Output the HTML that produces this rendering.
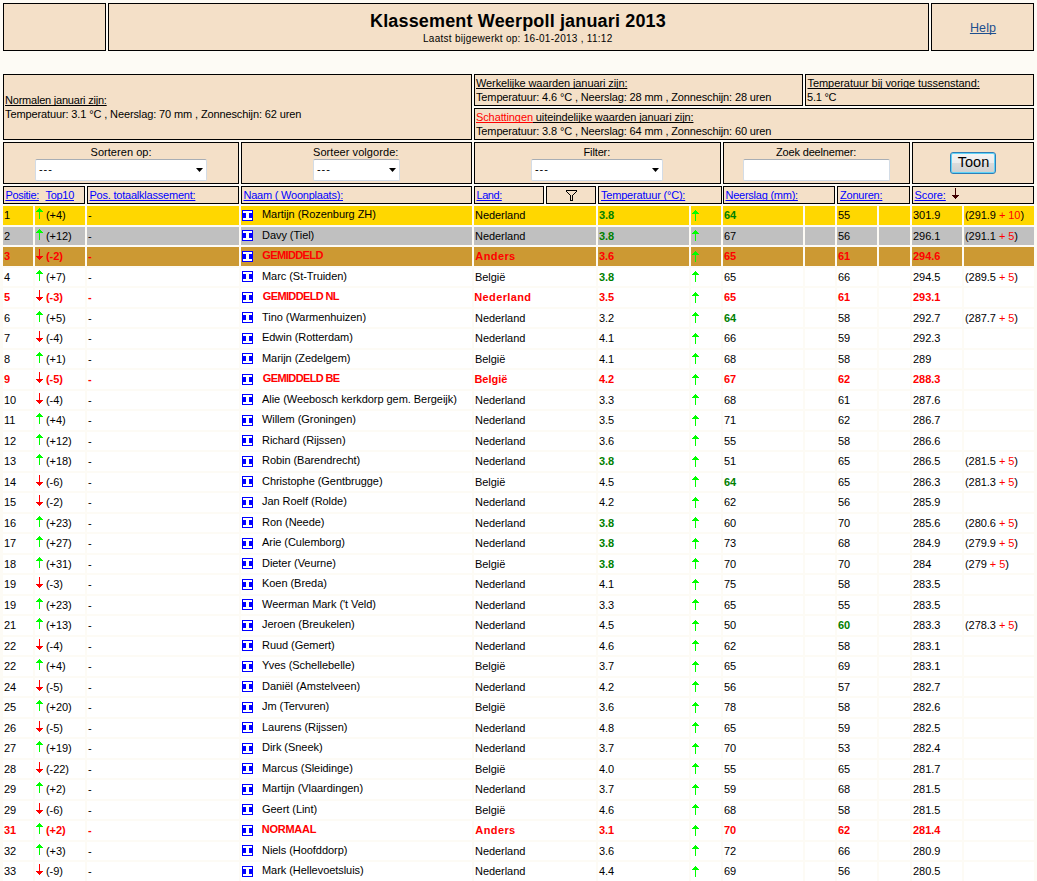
<!DOCTYPE html>
<html><head><meta charset="utf-8"><title>Klassement Weerpoll januari 2013</title>
<style>
html,body{margin:0;padding:0;}
body{width:1037px;height:881px;overflow:hidden;position:relative;background:#FDFBF5;font-family:"Liberation Sans",sans-serif;font-size:11px;color:#000;}
.c{position:absolute;box-sizing:border-box;}
.t{position:absolute;white-space:nowrap;line-height:13px;letter-spacing:-0.05px;}
u{text-decoration-skip-ink:none;}
.tt{position:absolute;white-space:nowrap;line-height:16px;}
.ab{position:absolute;line-height:0;}
.ab svg{display:block;}
.sel{position:absolute;box-sizing:border-box;background:#fff;border:1px solid #d3dce6;border-top-color:#a8aeb5;border-radius:2px;}
.dash{position:absolute;left:3px;top:3px;font-size:11px;line-height:13px;letter-spacing:0.9px;}
.caret{position:absolute;top:8px;}
.btn{position:absolute;box-sizing:border-box;border:1px solid #2f7fb8;border-radius:3px;box-shadow:inset 0 0 0 1px #5fd3f7;background:linear-gradient(#f4f4f4 0%,#ececec 50%,#dcdcdc 50%,#cfcfcf 100%);font-size:14.5px;letter-spacing:0px;line-height:18px;text-align:center;padding-left:1px;}

</style></head><body>
<div class="c" style="left:3px;top:3px;width:103px;height:48px;background:#F4E0C8;border:1px solid #000;"></div>
<div class="c" style="left:108px;top:3px;width:821px;height:48px;background:#F4E0C8;border:1px solid #000;"></div>
<div class="c" style="left:931px;top:3px;width:103px;height:48px;background:#F4E0C8;border:1px solid #000;"></div>
<div id="f_title" class="tt" style="left:370.00px;top:13px;font-size:18px;font-weight:bold;letter-spacing:0.161px;">Klassement Weerpoll januari 2013</div>
<div id="f_sub" class="tt" style="left:423.00px;top:30.5px;font-size:10px;letter-spacing:0.282px;">Laatst bijgewerkt op: 16-01-2013 , 11:12</div>
<div id="f_help" class="tt" style="left:969.90px;top:20px;font-size:12.5px;color:#1d4f8f;letter-spacing:0.134px;"><u>Help</u></div>
<div class="c" style="left:3px;top:74px;width:469px;height:66px;background:#F4E0C8;border:1px solid #000;"></div>
<div class="c" style="left:474px;top:74px;width:329px;height:32px;background:#F4E0C8;border:1px solid #000;"></div>
<div class="c" style="left:805px;top:74px;width:229px;height:32px;background:#F4E0C8;border:1px solid #000;"></div>
<div class="c" style="left:474px;top:108px;width:560px;height:32px;background:#F4E0C8;border:1px solid #000;"></div>
<div id="f_norm" class="t" style="left:5.00px;top:94px;letter-spacing:-0.214px;"><u>Normalen januari zijn:</u></div>
<div id="f_normt" class="t" style="left:5.00px;top:108px;letter-spacing:-0.119px;">Temperatuur: 3.1 °C , Neerslag: 70 mm , Zonneschijn: 62 uren</div>
<div id="f_werk" class="t" style="left:476.00px;top:77px;letter-spacing:-0.097px;"><u>Werkelijke waarden januari zijn:</u></div>
<div id="f_werkt" class="t" style="left:476.00px;top:91px;letter-spacing:-0.135px;">Temperatuur: 4.6 °C , Neerslag: 28 mm , Zonneschijn: 28 uren</div>
<div id="f_vor" class="t" style="left:807.50px;top:77px;letter-spacing:-0.059px;"><u>Temperatuur bij vorige tussenstand:</u></div>
<div id="f_vort" class="t" style="left:807.00px;top:91px;letter-spacing:-0.240px;">5.1 °C</div>
<div id="f_sch" class="t" style="left:476.00px;top:111px;letter-spacing:-0.109px;"><u style="color:#f00">Schattingen</u><u> uiteindelijke waarden januari zijn:</u></div>
<div id="f_scht" class="t" style="left:476.00px;top:125px;letter-spacing:-0.135px;">Temperatuur: 3.8 °C , Neerslag: 64 mm , Zonneschijn: 60 uren</div>
<div class="c" style="left:3px;top:142px;width:236px;height:42px;background:#F4E0C8;border:1px solid #000;"></div>
<div class="c" style="left:241px;top:142px;width:231px;height:42px;background:#F4E0C8;border:1px solid #000;"></div>
<div class="c" style="left:474px;top:142px;width:247px;height:42px;background:#F4E0C8;border:1px solid #000;"></div>
<div class="c" style="left:723px;top:142px;width:187px;height:42px;background:#F4E0C8;border:1px solid #000;"></div>
<div class="c" style="left:912px;top:142px;width:122px;height:42px;background:#F4E0C8;border:1px solid #000;"></div>
<div id="f_c1" class="t" style="left:90.50px;top:146px;letter-spacing:0.046px;">Sorteren op:</div>
<div id="f_c2" class="t" style="left:313.00px;top:146px;letter-spacing:0.062px;">Sorteer volgorde:</div>
<div id="f_c3" class="t" style="left:583.50px;top:146px;letter-spacing:-0.133px;">Filter:</div>
<div id="f_c4" class="t" style="left:776.00px;top:146px;letter-spacing:-0.167px;">Zoek deelnemer:</div>
<div class="sel" style="left:35px;top:159px;width:172px;height:22px;"><span class="dash">---</span><svg class="caret" width="7" height="4" style="left:160px"><path d="M0 0H7L3.5 4Z" fill="#000"/></svg></div>
<div class="sel" style="left:313px;top:159px;width:87px;height:22px;"><span class="dash">---</span><svg class="caret" width="7" height="4" style="left:75px"><path d="M0 0H7L3.5 4Z" fill="#000"/></svg></div>
<div class="sel" style="left:531px;top:159px;width:132px;height:22px;"><span class="dash">---</span><svg class="caret" width="7" height="4" style="left:120px"><path d="M0 0H7L3.5 4Z" fill="#000"/></svg></div>
<div class="sel" style="left:743px;top:159px;width:147px;height:22px;"></div>
<div class="btn" style="left:950px;top:152px;width:46px;height:22px;">Toon</div>
<div class="c" style="left:3px;top:186px;width:82px;height:18px;background:#F4E0C8;border:1px solid #000;"></div>
<div class="c" style="left:87px;top:186px;width:152px;height:18px;background:#F4E0C8;border:1px solid #000;"></div>
<div class="c" style="left:241px;top:186px;width:231px;height:18px;background:#F4E0C8;border:1px solid #000;"></div>
<div class="c" style="left:474px;top:186px;width:70px;height:18px;background:#F4E0C8;border:1px solid #000;"></div>
<div class="c" style="left:546px;top:186px;width:50px;height:18px;background:#F4E0C8;border:1px solid #000;"></div>
<div class="c" style="left:598px;top:186px;width:124px;height:18px;background:#F4E0C8;border:1px solid #000;"></div>
<div class="c" style="left:723px;top:186px;width:112px;height:18px;background:#F4E0C8;border:1px solid #000;"></div>
<div class="c" style="left:837px;top:186px;width:73px;height:18px;background:#F4E0C8;border:1px solid #000;"></div>
<div class="c" style="left:912px;top:186px;width:122px;height:18px;background:#F4E0C8;border:1px solid #000;"></div>
<div id="h1" class="t" style="left:5.40px;top:189px;color:#0000FF;letter-spacing:-0.316px;"><u>Positie:</u></div>
<div id="h2" class="t" style="left:45.50px;top:189px;color:#0000FF;letter-spacing:-0.300px;"><u>Top10</u></div>
<div id="h3" class="t" style="left:89.50px;top:189px;color:#0000FF;letter-spacing:-0.218px;"><u>Pos. totaalklassement:</u></div>
<div id="h4" class="t" style="left:243.50px;top:189px;color:#0000FF;letter-spacing:-0.222px;"><u>Naam ( Woonplaats):</u></div>
<div id="h5" class="t" style="left:476.50px;top:189px;color:#0000FF;letter-spacing:-0.450px;"><u>Land:</u></div>
<div id="h6" class="t" style="left:601.00px;top:189px;color:#0000FF;letter-spacing:-0.195px;"><u>Temperatuur (°C):</u></div>
<div id="h7" class="t" style="left:725.50px;top:189px;color:#0000FF;letter-spacing:-0.244px;"><u>Neerslag (mm):</u></div>
<div id="h8" class="t" style="left:840.00px;top:189px;color:#0000FF;letter-spacing:-0.205px;"><u>Zonuren:</u></div>
<div id="h9" class="t" style="left:914.50px;top:189px;color:#0000FF;letter-spacing:-0.080px;"><u>Score:</u></div>
<svg class="ab" style="left:566px;top:190px" width="11" height="11" shape-rendering="crispEdges"><g fill="#000"><rect x="0" y="0" width="11" height="1"/><rect x="0" y="1" width="1" height="1"/><rect x="10" y="1" width="1" height="1"/><rect x="1" y="2" width="1" height="1"/><rect x="9" y="2" width="1" height="1"/><rect x="2" y="3" width="1" height="1"/><rect x="8" y="3" width="1" height="1"/><rect x="3" y="4" width="1" height="1"/><rect x="7" y="4" width="1" height="1"/><rect x="4" y="5" width="1" height="5"/><rect x="6" y="5" width="1" height="5"/><rect x="4" y="10" width="3" height="1"/></g></svg>
<div class="ab" style="left:952px;top:188px"><svg width="7" height="11" shape-rendering="crispEdges"><g fill="#400000"><rect x="3" y="0" width="1" height="11"/><rect x="2" y="9" width="3" height="1"/><rect x="1" y="8" width="5" height="1"/><rect x="0" y="7" width="7" height="1"/></g></svg></div>
<div class="c" style="left:3px;top:206.0px;width:30px;height:18.5px;background:#FFD700"></div>
<div class="c" style="left:35px;top:206.0px;width:50px;height:18.5px;background:#FFD700"></div>
<div class="c" style="left:87px;top:206.0px;width:152px;height:18.5px;background:#FFD700"></div>
<div class="c" style="left:241px;top:206.0px;width:231px;height:18.5px;background:#FFD700"></div>
<div class="c" style="left:474px;top:206.0px;width:122px;height:18.5px;background:#FFD700"></div>
<div class="c" style="left:598px;top:206.0px;width:91px;height:18.5px;background:#FFD700"></div>
<div class="c" style="left:691px;top:206.0px;width:30px;height:18.5px;background:#FFD700"></div>
<div class="c" style="left:723px;top:206.0px;width:80px;height:18.5px;background:#FFD700"></div>
<div class="c" style="left:805px;top:206.0px;width:30px;height:18.5px;background:#FFD700"></div>
<div class="c" style="left:837px;top:206.0px;width:40px;height:18.5px;background:#FFD700"></div>
<div class="c" style="left:879px;top:206.0px;width:31px;height:18.5px;background:#FFD700"></div>
<div class="c" style="left:912px;top:206.0px;width:50px;height:18.5px;background:#FFD700"></div>
<div class="c" style="left:964px;top:206.0px;width:70px;height:18.5px;background:#FFD700"></div>
<div class="t" style="left:4px;top:209px;">1</div>
<div class="ab" style="left:36px;top:208px"><svg width="7" height="11" shape-rendering="crispEdges"><g fill="#00FF00"><rect x="3" y="0" width="1" height="11"/><rect x="2" y="1" width="3" height="1"/><rect x="1" y="2" width="5" height="1"/><rect x="0" y="3" width="7" height="1"/></g></svg></div>
<div class="t" style="left:46px;top:209px;">(+4)</div>
<div class="t" style="left:88px;top:209px;">-</div>
<div class="ab" style="left:242px;top:210px"><svg width="11" height="11" shape-rendering="crispEdges"><rect width="11" height="11" fill="#0000FF"/><g fill="#fff"><rect x="1" y="1" width="9" height="2"/><rect x="4" y="3" width="3" height="5"/><rect x="1" y="8" width="9" height="2"/></g></svg></div>
<div class="t" style="left:262px;top:208px;">Martijn (Rozenburg ZH)</div>
<div class="t" style="left:475px;top:209px;">Nederland</div>
<div class="t" style="left:599px;top:209px;color:#008000;font-weight:bold;">3.8</div>
<div class="ab" style="left:692px;top:210px"><svg width="7" height="11" shape-rendering="crispEdges"><g fill="#00FF00"><rect x="3" y="0" width="1" height="11"/><rect x="2" y="1" width="3" height="1"/><rect x="1" y="2" width="5" height="1"/><rect x="0" y="3" width="7" height="1"/></g></svg></div>
<div class="t" style="left:724px;top:209px;color:#008000;font-weight:bold;">64</div>
<div class="t" style="left:838px;top:209px;">55</div>
<div class="t" style="left:913px;top:209px;">301.9</div>
<div class="t" style="left:965px;top:209px;">(291.9 <span style="color:#FF0000">+ 10</span>)</div>
<div class="c" style="left:3px;top:226.5px;width:30px;height:18.5px;background:#C0C0C0"></div>
<div class="c" style="left:35px;top:226.5px;width:50px;height:18.5px;background:#C0C0C0"></div>
<div class="c" style="left:87px;top:226.5px;width:152px;height:18.5px;background:#C0C0C0"></div>
<div class="c" style="left:241px;top:226.5px;width:231px;height:18.5px;background:#C0C0C0"></div>
<div class="c" style="left:474px;top:226.5px;width:122px;height:18.5px;background:#C0C0C0"></div>
<div class="c" style="left:598px;top:226.5px;width:91px;height:18.5px;background:#C0C0C0"></div>
<div class="c" style="left:691px;top:226.5px;width:30px;height:18.5px;background:#C0C0C0"></div>
<div class="c" style="left:723px;top:226.5px;width:80px;height:18.5px;background:#C0C0C0"></div>
<div class="c" style="left:805px;top:226.5px;width:30px;height:18.5px;background:#C0C0C0"></div>
<div class="c" style="left:837px;top:226.5px;width:40px;height:18.5px;background:#C0C0C0"></div>
<div class="c" style="left:879px;top:226.5px;width:31px;height:18.5px;background:#C0C0C0"></div>
<div class="c" style="left:912px;top:226.5px;width:50px;height:18.5px;background:#C0C0C0"></div>
<div class="c" style="left:964px;top:226.5px;width:70px;height:18.5px;background:#C0C0C0"></div>
<div class="t" style="left:4px;top:230px;">2</div>
<div class="ab" style="left:36px;top:229px"><svg width="7" height="11" shape-rendering="crispEdges"><g fill="#00FF00"><rect x="3" y="0" width="1" height="11"/><rect x="2" y="1" width="3" height="1"/><rect x="1" y="2" width="5" height="1"/><rect x="0" y="3" width="7" height="1"/></g></svg></div>
<div class="t" style="left:46px;top:230px;">(+12)</div>
<div class="t" style="left:88px;top:230px;">-</div>
<div class="ab" style="left:242px;top:230px"><svg width="11" height="11" shape-rendering="crispEdges"><rect width="11" height="11" fill="#0000FF"/><g fill="#fff"><rect x="1" y="1" width="9" height="2"/><rect x="4" y="3" width="3" height="5"/><rect x="1" y="8" width="9" height="2"/></g></svg></div>
<div class="t" style="left:262px;top:229px;">Davy (Tiel)</div>
<div class="t" style="left:475px;top:230px;">Nederland</div>
<div class="t" style="left:599px;top:230px;color:#008000;font-weight:bold;">3.8</div>
<div class="ab" style="left:692px;top:230px"><svg width="7" height="11" shape-rendering="crispEdges"><g fill="#00FF00"><rect x="3" y="0" width="1" height="11"/><rect x="2" y="1" width="3" height="1"/><rect x="1" y="2" width="5" height="1"/><rect x="0" y="3" width="7" height="1"/></g></svg></div>
<div class="t" style="left:724px;top:230px;">67</div>
<div class="t" style="left:838px;top:230px;">56</div>
<div class="t" style="left:913px;top:230px;">296.1</div>
<div class="t" style="left:965px;top:230px;">(291.1 <span style="color:#FF0000">+ 5</span>)</div>
<div class="c" style="left:3px;top:247.0px;width:30px;height:18.5px;background:#CC9933"></div>
<div class="c" style="left:35px;top:247.0px;width:50px;height:18.5px;background:#CC9933"></div>
<div class="c" style="left:87px;top:247.0px;width:152px;height:18.5px;background:#CC9933"></div>
<div class="c" style="left:241px;top:247.0px;width:231px;height:18.5px;background:#CC9933"></div>
<div class="c" style="left:474px;top:247.0px;width:122px;height:18.5px;background:#CC9933"></div>
<div class="c" style="left:598px;top:247.0px;width:91px;height:18.5px;background:#CC9933"></div>
<div class="c" style="left:691px;top:247.0px;width:30px;height:18.5px;background:#CC9933"></div>
<div class="c" style="left:723px;top:247.0px;width:80px;height:18.5px;background:#CC9933"></div>
<div class="c" style="left:805px;top:247.0px;width:30px;height:18.5px;background:#CC9933"></div>
<div class="c" style="left:837px;top:247.0px;width:40px;height:18.5px;background:#CC9933"></div>
<div class="c" style="left:879px;top:247.0px;width:31px;height:18.5px;background:#CC9933"></div>
<div class="c" style="left:912px;top:247.0px;width:50px;height:18.5px;background:#CC9933"></div>
<div class="c" style="left:964px;top:247.0px;width:70px;height:18.5px;background:#CC9933"></div>
<div class="t" style="left:4px;top:250px;color:#FF0000;font-weight:bold;">3</div>
<div class="ab" style="left:36px;top:249px"><svg width="7" height="11" shape-rendering="crispEdges"><g fill="#FF0000"><rect x="3" y="0" width="1" height="11"/><rect x="2" y="9" width="3" height="1"/><rect x="1" y="8" width="5" height="1"/><rect x="0" y="7" width="7" height="1"/></g></svg></div>
<div class="t" style="left:46px;top:250px;color:#FF0000;font-weight:bold;">(-2)</div>
<div class="t" style="left:88px;top:250px;color:#FF0000;font-weight:bold;">-</div>
<div class="ab" style="left:242px;top:251px"><svg width="11" height="11" shape-rendering="crispEdges"><rect width="11" height="11" fill="#0000FF"/><g fill="#fff"><rect x="1" y="1" width="9" height="2"/><rect x="4" y="3" width="3" height="5"/><rect x="1" y="8" width="9" height="2"/></g></svg></div>
<div id="b_GEMIDDELD" class="t" style="left:262.30px;top:249px;color:#FF0000;font-weight:bold;letter-spacing:-0.615px;">GEMIDDELD</div>
<div id="b_Anders" class="t" style="left:475.30px;top:250px;color:#FF0000;font-weight:bold;letter-spacing:0.400px;">Anders</div>
<div class="t" style="left:599px;top:250px;color:#FF0000;font-weight:bold;">3.6</div>
<div class="ab" style="left:692px;top:251px"><svg width="7" height="11" shape-rendering="crispEdges"><g fill="#00FF00"><rect x="3" y="0" width="1" height="11"/><rect x="2" y="1" width="3" height="1"/><rect x="1" y="2" width="5" height="1"/><rect x="0" y="3" width="7" height="1"/></g></svg></div>
<div class="t" style="left:724px;top:250px;color:#FF0000;font-weight:bold;">65</div>
<div class="t" style="left:838px;top:250px;color:#FF0000;font-weight:bold;">61</div>
<div class="t" style="left:913px;top:250px;color:#FF0000;font-weight:bold;">294.6</div>
<div class="c" style="left:3px;top:267.5px;width:30px;height:18.5px;background:#FFFFFF"></div>
<div class="c" style="left:35px;top:267.5px;width:50px;height:18.5px;background:#FFFFFF"></div>
<div class="c" style="left:87px;top:267.5px;width:152px;height:18.5px;background:#FFFFFF"></div>
<div class="c" style="left:241px;top:267.5px;width:231px;height:18.5px;background:#FFFFFF"></div>
<div class="c" style="left:474px;top:267.5px;width:122px;height:18.5px;background:#FFFFFF"></div>
<div class="c" style="left:598px;top:267.5px;width:91px;height:18.5px;background:#FFFFFF"></div>
<div class="c" style="left:691px;top:267.5px;width:30px;height:18.5px;background:#FFFFFF"></div>
<div class="c" style="left:723px;top:267.5px;width:80px;height:18.5px;background:#FFFFFF"></div>
<div class="c" style="left:805px;top:267.5px;width:30px;height:18.5px;background:#FFFFFF"></div>
<div class="c" style="left:837px;top:267.5px;width:40px;height:18.5px;background:#FFFFFF"></div>
<div class="c" style="left:879px;top:267.5px;width:31px;height:18.5px;background:#FFFFFF"></div>
<div class="c" style="left:912px;top:267.5px;width:50px;height:18.5px;background:#FFFFFF"></div>
<div class="c" style="left:964px;top:267.5px;width:70px;height:18.5px;background:#FFFFFF"></div>
<div class="t" style="left:4px;top:271px;">4</div>
<div class="ab" style="left:36px;top:270px"><svg width="7" height="11" shape-rendering="crispEdges"><g fill="#00FF00"><rect x="3" y="0" width="1" height="11"/><rect x="2" y="1" width="3" height="1"/><rect x="1" y="2" width="5" height="1"/><rect x="0" y="3" width="7" height="1"/></g></svg></div>
<div class="t" style="left:46px;top:271px;">(+7)</div>
<div class="t" style="left:88px;top:271px;">-</div>
<div class="ab" style="left:242px;top:271px"><svg width="11" height="11" shape-rendering="crispEdges"><rect width="11" height="11" fill="#0000FF"/><g fill="#fff"><rect x="1" y="1" width="9" height="2"/><rect x="4" y="3" width="3" height="5"/><rect x="1" y="8" width="9" height="2"/></g></svg></div>
<div class="t" style="left:262px;top:270px;">Marc (St-Truiden)</div>
<div class="t" style="left:475px;top:271px;">België</div>
<div class="t" style="left:599px;top:271px;color:#008000;font-weight:bold;">3.8</div>
<div class="ab" style="left:692px;top:271px"><svg width="7" height="11" shape-rendering="crispEdges"><g fill="#00FF00"><rect x="3" y="0" width="1" height="11"/><rect x="2" y="1" width="3" height="1"/><rect x="1" y="2" width="5" height="1"/><rect x="0" y="3" width="7" height="1"/></g></svg></div>
<div class="t" style="left:724px;top:271px;">65</div>
<div class="t" style="left:838px;top:271px;">66</div>
<div class="t" style="left:913px;top:271px;">294.5</div>
<div class="t" style="left:965px;top:271px;">(289.5 <span style="color:#FF0000">+ 5</span>)</div>
<div class="c" style="left:3px;top:288.0px;width:30px;height:18.5px;background:#FFFFFF"></div>
<div class="c" style="left:35px;top:288.0px;width:50px;height:18.5px;background:#FFFFFF"></div>
<div class="c" style="left:87px;top:288.0px;width:152px;height:18.5px;background:#FFFFFF"></div>
<div class="c" style="left:241px;top:288.0px;width:231px;height:18.5px;background:#FFFFFF"></div>
<div class="c" style="left:474px;top:288.0px;width:122px;height:18.5px;background:#FFFFFF"></div>
<div class="c" style="left:598px;top:288.0px;width:91px;height:18.5px;background:#FFFFFF"></div>
<div class="c" style="left:691px;top:288.0px;width:30px;height:18.5px;background:#FFFFFF"></div>
<div class="c" style="left:723px;top:288.0px;width:80px;height:18.5px;background:#FFFFFF"></div>
<div class="c" style="left:805px;top:288.0px;width:30px;height:18.5px;background:#FFFFFF"></div>
<div class="c" style="left:837px;top:288.0px;width:40px;height:18.5px;background:#FFFFFF"></div>
<div class="c" style="left:879px;top:288.0px;width:31px;height:18.5px;background:#FFFFFF"></div>
<div class="c" style="left:912px;top:288.0px;width:50px;height:18.5px;background:#FFFFFF"></div>
<div class="c" style="left:964px;top:288.0px;width:70px;height:18.5px;background:#FFFFFF"></div>
<div class="t" style="left:4px;top:291px;color:#FF0000;font-weight:bold;">5</div>
<div class="ab" style="left:36px;top:290px"><svg width="7" height="11" shape-rendering="crispEdges"><g fill="#FF0000"><rect x="3" y="0" width="1" height="11"/><rect x="2" y="9" width="3" height="1"/><rect x="1" y="8" width="5" height="1"/><rect x="0" y="7" width="7" height="1"/></g></svg></div>
<div class="t" style="left:46px;top:291px;color:#FF0000;font-weight:bold;">(-3)</div>
<div class="t" style="left:88px;top:291px;color:#FF0000;font-weight:bold;">-</div>
<div class="ab" style="left:242px;top:292px"><svg width="11" height="11" shape-rendering="crispEdges"><rect width="11" height="11" fill="#0000FF"/><g fill="#fff"><rect x="1" y="1" width="9" height="2"/><rect x="4" y="3" width="3" height="5"/><rect x="1" y="8" width="9" height="2"/></g></svg></div>
<div id="b_GEMIDDELD_NL" class="t" style="left:262.80px;top:290px;color:#FF0000;font-weight:bold;letter-spacing:-0.640px;">GEMIDDELD NL</div>
<div id="b_Nederland" class="t" style="left:474.30px;top:291px;color:#FF0000;font-weight:bold;letter-spacing:0.375px;">Nederland</div>
<div class="t" style="left:599px;top:291px;color:#FF0000;font-weight:bold;">3.5</div>
<div class="ab" style="left:692px;top:292px"><svg width="7" height="11" shape-rendering="crispEdges"><g fill="#00FF00"><rect x="3" y="0" width="1" height="11"/><rect x="2" y="1" width="3" height="1"/><rect x="1" y="2" width="5" height="1"/><rect x="0" y="3" width="7" height="1"/></g></svg></div>
<div class="t" style="left:724px;top:291px;color:#FF0000;font-weight:bold;">65</div>
<div class="t" style="left:838px;top:291px;color:#FF0000;font-weight:bold;">61</div>
<div class="t" style="left:913px;top:291px;color:#FF0000;font-weight:bold;">293.1</div>
<div class="c" style="left:3px;top:308.5px;width:30px;height:18.5px;background:#FFFFFF"></div>
<div class="c" style="left:35px;top:308.5px;width:50px;height:18.5px;background:#FFFFFF"></div>
<div class="c" style="left:87px;top:308.5px;width:152px;height:18.5px;background:#FFFFFF"></div>
<div class="c" style="left:241px;top:308.5px;width:231px;height:18.5px;background:#FFFFFF"></div>
<div class="c" style="left:474px;top:308.5px;width:122px;height:18.5px;background:#FFFFFF"></div>
<div class="c" style="left:598px;top:308.5px;width:91px;height:18.5px;background:#FFFFFF"></div>
<div class="c" style="left:691px;top:308.5px;width:30px;height:18.5px;background:#FFFFFF"></div>
<div class="c" style="left:723px;top:308.5px;width:80px;height:18.5px;background:#FFFFFF"></div>
<div class="c" style="left:805px;top:308.5px;width:30px;height:18.5px;background:#FFFFFF"></div>
<div class="c" style="left:837px;top:308.5px;width:40px;height:18.5px;background:#FFFFFF"></div>
<div class="c" style="left:879px;top:308.5px;width:31px;height:18.5px;background:#FFFFFF"></div>
<div class="c" style="left:912px;top:308.5px;width:50px;height:18.5px;background:#FFFFFF"></div>
<div class="c" style="left:964px;top:308.5px;width:70px;height:18.5px;background:#FFFFFF"></div>
<div class="t" style="left:4px;top:312px;">6</div>
<div class="ab" style="left:36px;top:311px"><svg width="7" height="11" shape-rendering="crispEdges"><g fill="#00FF00"><rect x="3" y="0" width="1" height="11"/><rect x="2" y="1" width="3" height="1"/><rect x="1" y="2" width="5" height="1"/><rect x="0" y="3" width="7" height="1"/></g></svg></div>
<div class="t" style="left:46px;top:312px;">(+5)</div>
<div class="t" style="left:88px;top:312px;">-</div>
<div class="ab" style="left:242px;top:312px"><svg width="11" height="11" shape-rendering="crispEdges"><rect width="11" height="11" fill="#0000FF"/><g fill="#fff"><rect x="1" y="1" width="9" height="2"/><rect x="4" y="3" width="3" height="5"/><rect x="1" y="8" width="9" height="2"/></g></svg></div>
<div class="t" style="left:262px;top:311px;">Tino (Warmenhuizen)</div>
<div class="t" style="left:475px;top:312px;">Nederland</div>
<div class="t" style="left:599px;top:312px;">3.2</div>
<div class="ab" style="left:692px;top:312px"><svg width="7" height="11" shape-rendering="crispEdges"><g fill="#00FF00"><rect x="3" y="0" width="1" height="11"/><rect x="2" y="1" width="3" height="1"/><rect x="1" y="2" width="5" height="1"/><rect x="0" y="3" width="7" height="1"/></g></svg></div>
<div class="t" style="left:724px;top:312px;color:#008000;font-weight:bold;">64</div>
<div class="t" style="left:838px;top:312px;">58</div>
<div class="t" style="left:913px;top:312px;">292.7</div>
<div class="t" style="left:965px;top:312px;">(287.7 <span style="color:#FF0000">+ 5</span>)</div>
<div class="c" style="left:3px;top:329.0px;width:30px;height:18.5px;background:#FFFFFF"></div>
<div class="c" style="left:35px;top:329.0px;width:50px;height:18.5px;background:#FFFFFF"></div>
<div class="c" style="left:87px;top:329.0px;width:152px;height:18.5px;background:#FFFFFF"></div>
<div class="c" style="left:241px;top:329.0px;width:231px;height:18.5px;background:#FFFFFF"></div>
<div class="c" style="left:474px;top:329.0px;width:122px;height:18.5px;background:#FFFFFF"></div>
<div class="c" style="left:598px;top:329.0px;width:91px;height:18.5px;background:#FFFFFF"></div>
<div class="c" style="left:691px;top:329.0px;width:30px;height:18.5px;background:#FFFFFF"></div>
<div class="c" style="left:723px;top:329.0px;width:80px;height:18.5px;background:#FFFFFF"></div>
<div class="c" style="left:805px;top:329.0px;width:30px;height:18.5px;background:#FFFFFF"></div>
<div class="c" style="left:837px;top:329.0px;width:40px;height:18.5px;background:#FFFFFF"></div>
<div class="c" style="left:879px;top:329.0px;width:31px;height:18.5px;background:#FFFFFF"></div>
<div class="c" style="left:912px;top:329.0px;width:50px;height:18.5px;background:#FFFFFF"></div>
<div class="c" style="left:964px;top:329.0px;width:70px;height:18.5px;background:#FFFFFF"></div>
<div class="t" style="left:4px;top:332px;">7</div>
<div class="ab" style="left:36px;top:331px"><svg width="7" height="11" shape-rendering="crispEdges"><g fill="#FF0000"><rect x="3" y="0" width="1" height="11"/><rect x="2" y="9" width="3" height="1"/><rect x="1" y="8" width="5" height="1"/><rect x="0" y="7" width="7" height="1"/></g></svg></div>
<div class="t" style="left:46px;top:332px;">(-4)</div>
<div class="t" style="left:88px;top:332px;">-</div>
<div class="ab" style="left:242px;top:333px"><svg width="11" height="11" shape-rendering="crispEdges"><rect width="11" height="11" fill="#0000FF"/><g fill="#fff"><rect x="1" y="1" width="9" height="2"/><rect x="4" y="3" width="3" height="5"/><rect x="1" y="8" width="9" height="2"/></g></svg></div>
<div class="t" style="left:262px;top:331px;">Edwin (Rotterdam)</div>
<div class="t" style="left:475px;top:332px;">Nederland</div>
<div class="t" style="left:599px;top:332px;">4.1</div>
<div class="ab" style="left:692px;top:333px"><svg width="7" height="11" shape-rendering="crispEdges"><g fill="#00FF00"><rect x="3" y="0" width="1" height="11"/><rect x="2" y="1" width="3" height="1"/><rect x="1" y="2" width="5" height="1"/><rect x="0" y="3" width="7" height="1"/></g></svg></div>
<div class="t" style="left:724px;top:332px;">66</div>
<div class="t" style="left:838px;top:332px;">59</div>
<div class="t" style="left:913px;top:332px;">292.3</div>
<div class="c" style="left:3px;top:349.5px;width:30px;height:18.5px;background:#FFFFFF"></div>
<div class="c" style="left:35px;top:349.5px;width:50px;height:18.5px;background:#FFFFFF"></div>
<div class="c" style="left:87px;top:349.5px;width:152px;height:18.5px;background:#FFFFFF"></div>
<div class="c" style="left:241px;top:349.5px;width:231px;height:18.5px;background:#FFFFFF"></div>
<div class="c" style="left:474px;top:349.5px;width:122px;height:18.5px;background:#FFFFFF"></div>
<div class="c" style="left:598px;top:349.5px;width:91px;height:18.5px;background:#FFFFFF"></div>
<div class="c" style="left:691px;top:349.5px;width:30px;height:18.5px;background:#FFFFFF"></div>
<div class="c" style="left:723px;top:349.5px;width:80px;height:18.5px;background:#FFFFFF"></div>
<div class="c" style="left:805px;top:349.5px;width:30px;height:18.5px;background:#FFFFFF"></div>
<div class="c" style="left:837px;top:349.5px;width:40px;height:18.5px;background:#FFFFFF"></div>
<div class="c" style="left:879px;top:349.5px;width:31px;height:18.5px;background:#FFFFFF"></div>
<div class="c" style="left:912px;top:349.5px;width:50px;height:18.5px;background:#FFFFFF"></div>
<div class="c" style="left:964px;top:349.5px;width:70px;height:18.5px;background:#FFFFFF"></div>
<div class="t" style="left:4px;top:353px;">8</div>
<div class="ab" style="left:36px;top:352px"><svg width="7" height="11" shape-rendering="crispEdges"><g fill="#00FF00"><rect x="3" y="0" width="1" height="11"/><rect x="2" y="1" width="3" height="1"/><rect x="1" y="2" width="5" height="1"/><rect x="0" y="3" width="7" height="1"/></g></svg></div>
<div class="t" style="left:46px;top:353px;">(+1)</div>
<div class="t" style="left:88px;top:353px;">-</div>
<div class="ab" style="left:242px;top:353px"><svg width="11" height="11" shape-rendering="crispEdges"><rect width="11" height="11" fill="#0000FF"/><g fill="#fff"><rect x="1" y="1" width="9" height="2"/><rect x="4" y="3" width="3" height="5"/><rect x="1" y="8" width="9" height="2"/></g></svg></div>
<div class="t" style="left:262px;top:352px;">Marijn (Zedelgem)</div>
<div class="t" style="left:475px;top:353px;">België</div>
<div class="t" style="left:599px;top:353px;">4.1</div>
<div class="ab" style="left:692px;top:353px"><svg width="7" height="11" shape-rendering="crispEdges"><g fill="#00FF00"><rect x="3" y="0" width="1" height="11"/><rect x="2" y="1" width="3" height="1"/><rect x="1" y="2" width="5" height="1"/><rect x="0" y="3" width="7" height="1"/></g></svg></div>
<div class="t" style="left:724px;top:353px;">68</div>
<div class="t" style="left:838px;top:353px;">58</div>
<div class="t" style="left:913px;top:353px;">289</div>
<div class="c" style="left:3px;top:370.0px;width:30px;height:18.5px;background:#FFFFFF"></div>
<div class="c" style="left:35px;top:370.0px;width:50px;height:18.5px;background:#FFFFFF"></div>
<div class="c" style="left:87px;top:370.0px;width:152px;height:18.5px;background:#FFFFFF"></div>
<div class="c" style="left:241px;top:370.0px;width:231px;height:18.5px;background:#FFFFFF"></div>
<div class="c" style="left:474px;top:370.0px;width:122px;height:18.5px;background:#FFFFFF"></div>
<div class="c" style="left:598px;top:370.0px;width:91px;height:18.5px;background:#FFFFFF"></div>
<div class="c" style="left:691px;top:370.0px;width:30px;height:18.5px;background:#FFFFFF"></div>
<div class="c" style="left:723px;top:370.0px;width:80px;height:18.5px;background:#FFFFFF"></div>
<div class="c" style="left:805px;top:370.0px;width:30px;height:18.5px;background:#FFFFFF"></div>
<div class="c" style="left:837px;top:370.0px;width:40px;height:18.5px;background:#FFFFFF"></div>
<div class="c" style="left:879px;top:370.0px;width:31px;height:18.5px;background:#FFFFFF"></div>
<div class="c" style="left:912px;top:370.0px;width:50px;height:18.5px;background:#FFFFFF"></div>
<div class="c" style="left:964px;top:370.0px;width:70px;height:18.5px;background:#FFFFFF"></div>
<div class="t" style="left:4px;top:373px;color:#FF0000;font-weight:bold;">9</div>
<div class="ab" style="left:36px;top:372px"><svg width="7" height="11" shape-rendering="crispEdges"><g fill="#FF0000"><rect x="3" y="0" width="1" height="11"/><rect x="2" y="9" width="3" height="1"/><rect x="1" y="8" width="5" height="1"/><rect x="0" y="7" width="7" height="1"/></g></svg></div>
<div class="t" style="left:46px;top:373px;color:#FF0000;font-weight:bold;">(-5)</div>
<div class="t" style="left:88px;top:373px;color:#FF0000;font-weight:bold;">-</div>
<div class="ab" style="left:242px;top:374px"><svg width="11" height="11" shape-rendering="crispEdges"><rect width="11" height="11" fill="#0000FF"/><g fill="#fff"><rect x="1" y="1" width="9" height="2"/><rect x="4" y="3" width="3" height="5"/><rect x="1" y="8" width="9" height="2"/></g></svg></div>
<div class="t" style="left:262.8px;top:372px;color:#FF0000;font-weight:bold;letter-spacing:-0.640px;">GEMIDDELD BE</div>
<div id="b_Belgie" class="t" style="left:474.40px;top:373px;color:#FF0000;font-weight:bold;letter-spacing:0.000px;">België</div>
<div class="t" style="left:599px;top:373px;color:#FF0000;font-weight:bold;">4.2</div>
<div class="ab" style="left:692px;top:374px"><svg width="7" height="11" shape-rendering="crispEdges"><g fill="#00FF00"><rect x="3" y="0" width="1" height="11"/><rect x="2" y="1" width="3" height="1"/><rect x="1" y="2" width="5" height="1"/><rect x="0" y="3" width="7" height="1"/></g></svg></div>
<div class="t" style="left:724px;top:373px;color:#FF0000;font-weight:bold;">67</div>
<div class="t" style="left:838px;top:373px;color:#FF0000;font-weight:bold;">62</div>
<div class="t" style="left:913px;top:373px;color:#FF0000;font-weight:bold;">288.3</div>
<div class="c" style="left:3px;top:390.5px;width:30px;height:18.5px;background:#FFFFFF"></div>
<div class="c" style="left:35px;top:390.5px;width:50px;height:18.5px;background:#FFFFFF"></div>
<div class="c" style="left:87px;top:390.5px;width:152px;height:18.5px;background:#FFFFFF"></div>
<div class="c" style="left:241px;top:390.5px;width:231px;height:18.5px;background:#FFFFFF"></div>
<div class="c" style="left:474px;top:390.5px;width:122px;height:18.5px;background:#FFFFFF"></div>
<div class="c" style="left:598px;top:390.5px;width:91px;height:18.5px;background:#FFFFFF"></div>
<div class="c" style="left:691px;top:390.5px;width:30px;height:18.5px;background:#FFFFFF"></div>
<div class="c" style="left:723px;top:390.5px;width:80px;height:18.5px;background:#FFFFFF"></div>
<div class="c" style="left:805px;top:390.5px;width:30px;height:18.5px;background:#FFFFFF"></div>
<div class="c" style="left:837px;top:390.5px;width:40px;height:18.5px;background:#FFFFFF"></div>
<div class="c" style="left:879px;top:390.5px;width:31px;height:18.5px;background:#FFFFFF"></div>
<div class="c" style="left:912px;top:390.5px;width:50px;height:18.5px;background:#FFFFFF"></div>
<div class="c" style="left:964px;top:390.5px;width:70px;height:18.5px;background:#FFFFFF"></div>
<div class="t" style="left:4px;top:394px;">10</div>
<div class="ab" style="left:36px;top:393px"><svg width="7" height="11" shape-rendering="crispEdges"><g fill="#FF0000"><rect x="3" y="0" width="1" height="11"/><rect x="2" y="9" width="3" height="1"/><rect x="1" y="8" width="5" height="1"/><rect x="0" y="7" width="7" height="1"/></g></svg></div>
<div class="t" style="left:46px;top:394px;">(-4)</div>
<div class="t" style="left:88px;top:394px;">-</div>
<div class="ab" style="left:242px;top:394px"><svg width="11" height="11" shape-rendering="crispEdges"><rect width="11" height="11" fill="#0000FF"/><g fill="#fff"><rect x="1" y="1" width="9" height="2"/><rect x="4" y="3" width="3" height="5"/><rect x="1" y="8" width="9" height="2"/></g></svg></div>
<div class="t" style="left:262px;top:393px;">Alie (Weebosch kerkdorp gem. Bergeijk)</div>
<div class="t" style="left:475px;top:394px;">Nederland</div>
<div class="t" style="left:599px;top:394px;">3.3</div>
<div class="ab" style="left:692px;top:394px"><svg width="7" height="11" shape-rendering="crispEdges"><g fill="#00FF00"><rect x="3" y="0" width="1" height="11"/><rect x="2" y="1" width="3" height="1"/><rect x="1" y="2" width="5" height="1"/><rect x="0" y="3" width="7" height="1"/></g></svg></div>
<div class="t" style="left:724px;top:394px;">68</div>
<div class="t" style="left:838px;top:394px;">61</div>
<div class="t" style="left:913px;top:394px;">287.6</div>
<div class="c" style="left:3px;top:411.0px;width:30px;height:18.5px;background:#FFFFFF"></div>
<div class="c" style="left:35px;top:411.0px;width:50px;height:18.5px;background:#FFFFFF"></div>
<div class="c" style="left:87px;top:411.0px;width:152px;height:18.5px;background:#FFFFFF"></div>
<div class="c" style="left:241px;top:411.0px;width:231px;height:18.5px;background:#FFFFFF"></div>
<div class="c" style="left:474px;top:411.0px;width:122px;height:18.5px;background:#FFFFFF"></div>
<div class="c" style="left:598px;top:411.0px;width:91px;height:18.5px;background:#FFFFFF"></div>
<div class="c" style="left:691px;top:411.0px;width:30px;height:18.5px;background:#FFFFFF"></div>
<div class="c" style="left:723px;top:411.0px;width:80px;height:18.5px;background:#FFFFFF"></div>
<div class="c" style="left:805px;top:411.0px;width:30px;height:18.5px;background:#FFFFFF"></div>
<div class="c" style="left:837px;top:411.0px;width:40px;height:18.5px;background:#FFFFFF"></div>
<div class="c" style="left:879px;top:411.0px;width:31px;height:18.5px;background:#FFFFFF"></div>
<div class="c" style="left:912px;top:411.0px;width:50px;height:18.5px;background:#FFFFFF"></div>
<div class="c" style="left:964px;top:411.0px;width:70px;height:18.5px;background:#FFFFFF"></div>
<div class="t" style="left:4px;top:414px;">11</div>
<div class="ab" style="left:36px;top:413px"><svg width="7" height="11" shape-rendering="crispEdges"><g fill="#00FF00"><rect x="3" y="0" width="1" height="11"/><rect x="2" y="1" width="3" height="1"/><rect x="1" y="2" width="5" height="1"/><rect x="0" y="3" width="7" height="1"/></g></svg></div>
<div class="t" style="left:46px;top:414px;">(+4)</div>
<div class="t" style="left:88px;top:414px;">-</div>
<div class="ab" style="left:242px;top:415px"><svg width="11" height="11" shape-rendering="crispEdges"><rect width="11" height="11" fill="#0000FF"/><g fill="#fff"><rect x="1" y="1" width="9" height="2"/><rect x="4" y="3" width="3" height="5"/><rect x="1" y="8" width="9" height="2"/></g></svg></div>
<div class="t" style="left:262px;top:413px;">Willem (Groningen)</div>
<div class="t" style="left:475px;top:414px;">Nederland</div>
<div class="t" style="left:599px;top:414px;">3.5</div>
<div class="ab" style="left:692px;top:415px"><svg width="7" height="11" shape-rendering="crispEdges"><g fill="#00FF00"><rect x="3" y="0" width="1" height="11"/><rect x="2" y="1" width="3" height="1"/><rect x="1" y="2" width="5" height="1"/><rect x="0" y="3" width="7" height="1"/></g></svg></div>
<div class="t" style="left:724px;top:414px;">71</div>
<div class="t" style="left:838px;top:414px;">62</div>
<div class="t" style="left:913px;top:414px;">286.7</div>
<div class="c" style="left:3px;top:431.5px;width:30px;height:18.5px;background:#FFFFFF"></div>
<div class="c" style="left:35px;top:431.5px;width:50px;height:18.5px;background:#FFFFFF"></div>
<div class="c" style="left:87px;top:431.5px;width:152px;height:18.5px;background:#FFFFFF"></div>
<div class="c" style="left:241px;top:431.5px;width:231px;height:18.5px;background:#FFFFFF"></div>
<div class="c" style="left:474px;top:431.5px;width:122px;height:18.5px;background:#FFFFFF"></div>
<div class="c" style="left:598px;top:431.5px;width:91px;height:18.5px;background:#FFFFFF"></div>
<div class="c" style="left:691px;top:431.5px;width:30px;height:18.5px;background:#FFFFFF"></div>
<div class="c" style="left:723px;top:431.5px;width:80px;height:18.5px;background:#FFFFFF"></div>
<div class="c" style="left:805px;top:431.5px;width:30px;height:18.5px;background:#FFFFFF"></div>
<div class="c" style="left:837px;top:431.5px;width:40px;height:18.5px;background:#FFFFFF"></div>
<div class="c" style="left:879px;top:431.5px;width:31px;height:18.5px;background:#FFFFFF"></div>
<div class="c" style="left:912px;top:431.5px;width:50px;height:18.5px;background:#FFFFFF"></div>
<div class="c" style="left:964px;top:431.5px;width:70px;height:18.5px;background:#FFFFFF"></div>
<div class="t" style="left:4px;top:435px;">12</div>
<div class="ab" style="left:36px;top:434px"><svg width="7" height="11" shape-rendering="crispEdges"><g fill="#00FF00"><rect x="3" y="0" width="1" height="11"/><rect x="2" y="1" width="3" height="1"/><rect x="1" y="2" width="5" height="1"/><rect x="0" y="3" width="7" height="1"/></g></svg></div>
<div class="t" style="left:46px;top:435px;">(+12)</div>
<div class="t" style="left:88px;top:435px;">-</div>
<div class="ab" style="left:242px;top:435px"><svg width="11" height="11" shape-rendering="crispEdges"><rect width="11" height="11" fill="#0000FF"/><g fill="#fff"><rect x="1" y="1" width="9" height="2"/><rect x="4" y="3" width="3" height="5"/><rect x="1" y="8" width="9" height="2"/></g></svg></div>
<div class="t" style="left:262px;top:434px;">Richard (Rijssen)</div>
<div class="t" style="left:475px;top:435px;">Nederland</div>
<div class="t" style="left:599px;top:435px;">3.6</div>
<div class="ab" style="left:692px;top:435px"><svg width="7" height="11" shape-rendering="crispEdges"><g fill="#00FF00"><rect x="3" y="0" width="1" height="11"/><rect x="2" y="1" width="3" height="1"/><rect x="1" y="2" width="5" height="1"/><rect x="0" y="3" width="7" height="1"/></g></svg></div>
<div class="t" style="left:724px;top:435px;">55</div>
<div class="t" style="left:838px;top:435px;">58</div>
<div class="t" style="left:913px;top:435px;">286.6</div>
<div class="c" style="left:3px;top:452.0px;width:30px;height:18.5px;background:#FFFFFF"></div>
<div class="c" style="left:35px;top:452.0px;width:50px;height:18.5px;background:#FFFFFF"></div>
<div class="c" style="left:87px;top:452.0px;width:152px;height:18.5px;background:#FFFFFF"></div>
<div class="c" style="left:241px;top:452.0px;width:231px;height:18.5px;background:#FFFFFF"></div>
<div class="c" style="left:474px;top:452.0px;width:122px;height:18.5px;background:#FFFFFF"></div>
<div class="c" style="left:598px;top:452.0px;width:91px;height:18.5px;background:#FFFFFF"></div>
<div class="c" style="left:691px;top:452.0px;width:30px;height:18.5px;background:#FFFFFF"></div>
<div class="c" style="left:723px;top:452.0px;width:80px;height:18.5px;background:#FFFFFF"></div>
<div class="c" style="left:805px;top:452.0px;width:30px;height:18.5px;background:#FFFFFF"></div>
<div class="c" style="left:837px;top:452.0px;width:40px;height:18.5px;background:#FFFFFF"></div>
<div class="c" style="left:879px;top:452.0px;width:31px;height:18.5px;background:#FFFFFF"></div>
<div class="c" style="left:912px;top:452.0px;width:50px;height:18.5px;background:#FFFFFF"></div>
<div class="c" style="left:964px;top:452.0px;width:70px;height:18.5px;background:#FFFFFF"></div>
<div class="t" style="left:4px;top:455px;">13</div>
<div class="ab" style="left:36px;top:454px"><svg width="7" height="11" shape-rendering="crispEdges"><g fill="#00FF00"><rect x="3" y="0" width="1" height="11"/><rect x="2" y="1" width="3" height="1"/><rect x="1" y="2" width="5" height="1"/><rect x="0" y="3" width="7" height="1"/></g></svg></div>
<div class="t" style="left:46px;top:455px;">(+18)</div>
<div class="t" style="left:88px;top:455px;">-</div>
<div class="ab" style="left:242px;top:456px"><svg width="11" height="11" shape-rendering="crispEdges"><rect width="11" height="11" fill="#0000FF"/><g fill="#fff"><rect x="1" y="1" width="9" height="2"/><rect x="4" y="3" width="3" height="5"/><rect x="1" y="8" width="9" height="2"/></g></svg></div>
<div class="t" style="left:262px;top:454px;">Robin (Barendrecht)</div>
<div class="t" style="left:475px;top:455px;">Nederland</div>
<div class="t" style="left:599px;top:455px;color:#008000;font-weight:bold;">3.8</div>
<div class="ab" style="left:692px;top:456px"><svg width="7" height="11" shape-rendering="crispEdges"><g fill="#00FF00"><rect x="3" y="0" width="1" height="11"/><rect x="2" y="1" width="3" height="1"/><rect x="1" y="2" width="5" height="1"/><rect x="0" y="3" width="7" height="1"/></g></svg></div>
<div class="t" style="left:724px;top:455px;">51</div>
<div class="t" style="left:838px;top:455px;">65</div>
<div class="t" style="left:913px;top:455px;">286.5</div>
<div class="t" style="left:965px;top:455px;">(281.5 <span style="color:#FF0000">+ 5</span>)</div>
<div class="c" style="left:3px;top:472.5px;width:30px;height:18.5px;background:#FFFFFF"></div>
<div class="c" style="left:35px;top:472.5px;width:50px;height:18.5px;background:#FFFFFF"></div>
<div class="c" style="left:87px;top:472.5px;width:152px;height:18.5px;background:#FFFFFF"></div>
<div class="c" style="left:241px;top:472.5px;width:231px;height:18.5px;background:#FFFFFF"></div>
<div class="c" style="left:474px;top:472.5px;width:122px;height:18.5px;background:#FFFFFF"></div>
<div class="c" style="left:598px;top:472.5px;width:91px;height:18.5px;background:#FFFFFF"></div>
<div class="c" style="left:691px;top:472.5px;width:30px;height:18.5px;background:#FFFFFF"></div>
<div class="c" style="left:723px;top:472.5px;width:80px;height:18.5px;background:#FFFFFF"></div>
<div class="c" style="left:805px;top:472.5px;width:30px;height:18.5px;background:#FFFFFF"></div>
<div class="c" style="left:837px;top:472.5px;width:40px;height:18.5px;background:#FFFFFF"></div>
<div class="c" style="left:879px;top:472.5px;width:31px;height:18.5px;background:#FFFFFF"></div>
<div class="c" style="left:912px;top:472.5px;width:50px;height:18.5px;background:#FFFFFF"></div>
<div class="c" style="left:964px;top:472.5px;width:70px;height:18.5px;background:#FFFFFF"></div>
<div class="t" style="left:4px;top:476px;">14</div>
<div class="ab" style="left:36px;top:475px"><svg width="7" height="11" shape-rendering="crispEdges"><g fill="#FF0000"><rect x="3" y="0" width="1" height="11"/><rect x="2" y="9" width="3" height="1"/><rect x="1" y="8" width="5" height="1"/><rect x="0" y="7" width="7" height="1"/></g></svg></div>
<div class="t" style="left:46px;top:476px;">(-6)</div>
<div class="t" style="left:88px;top:476px;">-</div>
<div class="ab" style="left:242px;top:476px"><svg width="11" height="11" shape-rendering="crispEdges"><rect width="11" height="11" fill="#0000FF"/><g fill="#fff"><rect x="1" y="1" width="9" height="2"/><rect x="4" y="3" width="3" height="5"/><rect x="1" y="8" width="9" height="2"/></g></svg></div>
<div class="t" style="left:262px;top:475px;">Christophe (Gentbrugge)</div>
<div class="t" style="left:475px;top:476px;">België</div>
<div class="t" style="left:599px;top:476px;">4.5</div>
<div class="ab" style="left:692px;top:476px"><svg width="7" height="11" shape-rendering="crispEdges"><g fill="#00FF00"><rect x="3" y="0" width="1" height="11"/><rect x="2" y="1" width="3" height="1"/><rect x="1" y="2" width="5" height="1"/><rect x="0" y="3" width="7" height="1"/></g></svg></div>
<div class="t" style="left:724px;top:476px;color:#008000;font-weight:bold;">64</div>
<div class="t" style="left:838px;top:476px;">65</div>
<div class="t" style="left:913px;top:476px;">286.3</div>
<div class="t" style="left:965px;top:476px;">(281.3 <span style="color:#FF0000">+ 5</span>)</div>
<div class="c" style="left:3px;top:493.0px;width:30px;height:18.5px;background:#FFFFFF"></div>
<div class="c" style="left:35px;top:493.0px;width:50px;height:18.5px;background:#FFFFFF"></div>
<div class="c" style="left:87px;top:493.0px;width:152px;height:18.5px;background:#FFFFFF"></div>
<div class="c" style="left:241px;top:493.0px;width:231px;height:18.5px;background:#FFFFFF"></div>
<div class="c" style="left:474px;top:493.0px;width:122px;height:18.5px;background:#FFFFFF"></div>
<div class="c" style="left:598px;top:493.0px;width:91px;height:18.5px;background:#FFFFFF"></div>
<div class="c" style="left:691px;top:493.0px;width:30px;height:18.5px;background:#FFFFFF"></div>
<div class="c" style="left:723px;top:493.0px;width:80px;height:18.5px;background:#FFFFFF"></div>
<div class="c" style="left:805px;top:493.0px;width:30px;height:18.5px;background:#FFFFFF"></div>
<div class="c" style="left:837px;top:493.0px;width:40px;height:18.5px;background:#FFFFFF"></div>
<div class="c" style="left:879px;top:493.0px;width:31px;height:18.5px;background:#FFFFFF"></div>
<div class="c" style="left:912px;top:493.0px;width:50px;height:18.5px;background:#FFFFFF"></div>
<div class="c" style="left:964px;top:493.0px;width:70px;height:18.5px;background:#FFFFFF"></div>
<div class="t" style="left:4px;top:496px;">15</div>
<div class="ab" style="left:36px;top:495px"><svg width="7" height="11" shape-rendering="crispEdges"><g fill="#FF0000"><rect x="3" y="0" width="1" height="11"/><rect x="2" y="9" width="3" height="1"/><rect x="1" y="8" width="5" height="1"/><rect x="0" y="7" width="7" height="1"/></g></svg></div>
<div class="t" style="left:46px;top:496px;">(-2)</div>
<div class="t" style="left:88px;top:496px;">-</div>
<div class="ab" style="left:242px;top:497px"><svg width="11" height="11" shape-rendering="crispEdges"><rect width="11" height="11" fill="#0000FF"/><g fill="#fff"><rect x="1" y="1" width="9" height="2"/><rect x="4" y="3" width="3" height="5"/><rect x="1" y="8" width="9" height="2"/></g></svg></div>
<div class="t" style="left:262px;top:495px;">Jan Roelf (Rolde)</div>
<div class="t" style="left:475px;top:496px;">Nederland</div>
<div class="t" style="left:599px;top:496px;">4.2</div>
<div class="ab" style="left:692px;top:497px"><svg width="7" height="11" shape-rendering="crispEdges"><g fill="#00FF00"><rect x="3" y="0" width="1" height="11"/><rect x="2" y="1" width="3" height="1"/><rect x="1" y="2" width="5" height="1"/><rect x="0" y="3" width="7" height="1"/></g></svg></div>
<div class="t" style="left:724px;top:496px;">62</div>
<div class="t" style="left:838px;top:496px;">56</div>
<div class="t" style="left:913px;top:496px;">285.9</div>
<div class="c" style="left:3px;top:513.5px;width:30px;height:18.5px;background:#FFFFFF"></div>
<div class="c" style="left:35px;top:513.5px;width:50px;height:18.5px;background:#FFFFFF"></div>
<div class="c" style="left:87px;top:513.5px;width:152px;height:18.5px;background:#FFFFFF"></div>
<div class="c" style="left:241px;top:513.5px;width:231px;height:18.5px;background:#FFFFFF"></div>
<div class="c" style="left:474px;top:513.5px;width:122px;height:18.5px;background:#FFFFFF"></div>
<div class="c" style="left:598px;top:513.5px;width:91px;height:18.5px;background:#FFFFFF"></div>
<div class="c" style="left:691px;top:513.5px;width:30px;height:18.5px;background:#FFFFFF"></div>
<div class="c" style="left:723px;top:513.5px;width:80px;height:18.5px;background:#FFFFFF"></div>
<div class="c" style="left:805px;top:513.5px;width:30px;height:18.5px;background:#FFFFFF"></div>
<div class="c" style="left:837px;top:513.5px;width:40px;height:18.5px;background:#FFFFFF"></div>
<div class="c" style="left:879px;top:513.5px;width:31px;height:18.5px;background:#FFFFFF"></div>
<div class="c" style="left:912px;top:513.5px;width:50px;height:18.5px;background:#FFFFFF"></div>
<div class="c" style="left:964px;top:513.5px;width:70px;height:18.5px;background:#FFFFFF"></div>
<div class="t" style="left:4px;top:517px;">16</div>
<div class="ab" style="left:36px;top:516px"><svg width="7" height="11" shape-rendering="crispEdges"><g fill="#00FF00"><rect x="3" y="0" width="1" height="11"/><rect x="2" y="1" width="3" height="1"/><rect x="1" y="2" width="5" height="1"/><rect x="0" y="3" width="7" height="1"/></g></svg></div>
<div class="t" style="left:46px;top:517px;">(+23)</div>
<div class="t" style="left:88px;top:517px;">-</div>
<div class="ab" style="left:242px;top:517px"><svg width="11" height="11" shape-rendering="crispEdges"><rect width="11" height="11" fill="#0000FF"/><g fill="#fff"><rect x="1" y="1" width="9" height="2"/><rect x="4" y="3" width="3" height="5"/><rect x="1" y="8" width="9" height="2"/></g></svg></div>
<div class="t" style="left:262px;top:516px;">Ron (Neede)</div>
<div class="t" style="left:475px;top:517px;">Nederland</div>
<div class="t" style="left:599px;top:517px;color:#008000;font-weight:bold;">3.8</div>
<div class="ab" style="left:692px;top:517px"><svg width="7" height="11" shape-rendering="crispEdges"><g fill="#00FF00"><rect x="3" y="0" width="1" height="11"/><rect x="2" y="1" width="3" height="1"/><rect x="1" y="2" width="5" height="1"/><rect x="0" y="3" width="7" height="1"/></g></svg></div>
<div class="t" style="left:724px;top:517px;">60</div>
<div class="t" style="left:838px;top:517px;">70</div>
<div class="t" style="left:913px;top:517px;">285.6</div>
<div class="t" style="left:965px;top:517px;">(280.6 <span style="color:#FF0000">+ 5</span>)</div>
<div class="c" style="left:3px;top:534.0px;width:30px;height:18.5px;background:#FFFFFF"></div>
<div class="c" style="left:35px;top:534.0px;width:50px;height:18.5px;background:#FFFFFF"></div>
<div class="c" style="left:87px;top:534.0px;width:152px;height:18.5px;background:#FFFFFF"></div>
<div class="c" style="left:241px;top:534.0px;width:231px;height:18.5px;background:#FFFFFF"></div>
<div class="c" style="left:474px;top:534.0px;width:122px;height:18.5px;background:#FFFFFF"></div>
<div class="c" style="left:598px;top:534.0px;width:91px;height:18.5px;background:#FFFFFF"></div>
<div class="c" style="left:691px;top:534.0px;width:30px;height:18.5px;background:#FFFFFF"></div>
<div class="c" style="left:723px;top:534.0px;width:80px;height:18.5px;background:#FFFFFF"></div>
<div class="c" style="left:805px;top:534.0px;width:30px;height:18.5px;background:#FFFFFF"></div>
<div class="c" style="left:837px;top:534.0px;width:40px;height:18.5px;background:#FFFFFF"></div>
<div class="c" style="left:879px;top:534.0px;width:31px;height:18.5px;background:#FFFFFF"></div>
<div class="c" style="left:912px;top:534.0px;width:50px;height:18.5px;background:#FFFFFF"></div>
<div class="c" style="left:964px;top:534.0px;width:70px;height:18.5px;background:#FFFFFF"></div>
<div class="t" style="left:4px;top:537px;">17</div>
<div class="ab" style="left:36px;top:536px"><svg width="7" height="11" shape-rendering="crispEdges"><g fill="#00FF00"><rect x="3" y="0" width="1" height="11"/><rect x="2" y="1" width="3" height="1"/><rect x="1" y="2" width="5" height="1"/><rect x="0" y="3" width="7" height="1"/></g></svg></div>
<div class="t" style="left:46px;top:537px;">(+27)</div>
<div class="t" style="left:88px;top:537px;">-</div>
<div class="ab" style="left:242px;top:538px"><svg width="11" height="11" shape-rendering="crispEdges"><rect width="11" height="11" fill="#0000FF"/><g fill="#fff"><rect x="1" y="1" width="9" height="2"/><rect x="4" y="3" width="3" height="5"/><rect x="1" y="8" width="9" height="2"/></g></svg></div>
<div class="t" style="left:262px;top:536px;">Arie (Culemborg)</div>
<div class="t" style="left:475px;top:537px;">Nederland</div>
<div class="t" style="left:599px;top:537px;color:#008000;font-weight:bold;">3.8</div>
<div class="ab" style="left:692px;top:538px"><svg width="7" height="11" shape-rendering="crispEdges"><g fill="#00FF00"><rect x="3" y="0" width="1" height="11"/><rect x="2" y="1" width="3" height="1"/><rect x="1" y="2" width="5" height="1"/><rect x="0" y="3" width="7" height="1"/></g></svg></div>
<div class="t" style="left:724px;top:537px;">73</div>
<div class="t" style="left:838px;top:537px;">68</div>
<div class="t" style="left:913px;top:537px;">284.9</div>
<div class="t" style="left:965px;top:537px;">(279.9 <span style="color:#FF0000">+ 5</span>)</div>
<div class="c" style="left:3px;top:554.5px;width:30px;height:18.5px;background:#FFFFFF"></div>
<div class="c" style="left:35px;top:554.5px;width:50px;height:18.5px;background:#FFFFFF"></div>
<div class="c" style="left:87px;top:554.5px;width:152px;height:18.5px;background:#FFFFFF"></div>
<div class="c" style="left:241px;top:554.5px;width:231px;height:18.5px;background:#FFFFFF"></div>
<div class="c" style="left:474px;top:554.5px;width:122px;height:18.5px;background:#FFFFFF"></div>
<div class="c" style="left:598px;top:554.5px;width:91px;height:18.5px;background:#FFFFFF"></div>
<div class="c" style="left:691px;top:554.5px;width:30px;height:18.5px;background:#FFFFFF"></div>
<div class="c" style="left:723px;top:554.5px;width:80px;height:18.5px;background:#FFFFFF"></div>
<div class="c" style="left:805px;top:554.5px;width:30px;height:18.5px;background:#FFFFFF"></div>
<div class="c" style="left:837px;top:554.5px;width:40px;height:18.5px;background:#FFFFFF"></div>
<div class="c" style="left:879px;top:554.5px;width:31px;height:18.5px;background:#FFFFFF"></div>
<div class="c" style="left:912px;top:554.5px;width:50px;height:18.5px;background:#FFFFFF"></div>
<div class="c" style="left:964px;top:554.5px;width:70px;height:18.5px;background:#FFFFFF"></div>
<div class="t" style="left:4px;top:558px;">18</div>
<div class="ab" style="left:36px;top:557px"><svg width="7" height="11" shape-rendering="crispEdges"><g fill="#00FF00"><rect x="3" y="0" width="1" height="11"/><rect x="2" y="1" width="3" height="1"/><rect x="1" y="2" width="5" height="1"/><rect x="0" y="3" width="7" height="1"/></g></svg></div>
<div class="t" style="left:46px;top:558px;">(+31)</div>
<div class="t" style="left:88px;top:558px;">-</div>
<div class="ab" style="left:242px;top:558px"><svg width="11" height="11" shape-rendering="crispEdges"><rect width="11" height="11" fill="#0000FF"/><g fill="#fff"><rect x="1" y="1" width="9" height="2"/><rect x="4" y="3" width="3" height="5"/><rect x="1" y="8" width="9" height="2"/></g></svg></div>
<div class="t" style="left:262px;top:557px;">Dieter (Veurne)</div>
<div class="t" style="left:475px;top:558px;">België</div>
<div class="t" style="left:599px;top:558px;color:#008000;font-weight:bold;">3.8</div>
<div class="ab" style="left:692px;top:558px"><svg width="7" height="11" shape-rendering="crispEdges"><g fill="#00FF00"><rect x="3" y="0" width="1" height="11"/><rect x="2" y="1" width="3" height="1"/><rect x="1" y="2" width="5" height="1"/><rect x="0" y="3" width="7" height="1"/></g></svg></div>
<div class="t" style="left:724px;top:558px;">70</div>
<div class="t" style="left:838px;top:558px;">70</div>
<div class="t" style="left:913px;top:558px;">284</div>
<div class="t" style="left:965px;top:558px;">(279 <span style="color:#FF0000">+ 5</span>)</div>
<div class="c" style="left:3px;top:575.0px;width:30px;height:18.5px;background:#FFFFFF"></div>
<div class="c" style="left:35px;top:575.0px;width:50px;height:18.5px;background:#FFFFFF"></div>
<div class="c" style="left:87px;top:575.0px;width:152px;height:18.5px;background:#FFFFFF"></div>
<div class="c" style="left:241px;top:575.0px;width:231px;height:18.5px;background:#FFFFFF"></div>
<div class="c" style="left:474px;top:575.0px;width:122px;height:18.5px;background:#FFFFFF"></div>
<div class="c" style="left:598px;top:575.0px;width:91px;height:18.5px;background:#FFFFFF"></div>
<div class="c" style="left:691px;top:575.0px;width:30px;height:18.5px;background:#FFFFFF"></div>
<div class="c" style="left:723px;top:575.0px;width:80px;height:18.5px;background:#FFFFFF"></div>
<div class="c" style="left:805px;top:575.0px;width:30px;height:18.5px;background:#FFFFFF"></div>
<div class="c" style="left:837px;top:575.0px;width:40px;height:18.5px;background:#FFFFFF"></div>
<div class="c" style="left:879px;top:575.0px;width:31px;height:18.5px;background:#FFFFFF"></div>
<div class="c" style="left:912px;top:575.0px;width:50px;height:18.5px;background:#FFFFFF"></div>
<div class="c" style="left:964px;top:575.0px;width:70px;height:18.5px;background:#FFFFFF"></div>
<div class="t" style="left:4px;top:578px;">19</div>
<div class="ab" style="left:36px;top:577px"><svg width="7" height="11" shape-rendering="crispEdges"><g fill="#FF0000"><rect x="3" y="0" width="1" height="11"/><rect x="2" y="9" width="3" height="1"/><rect x="1" y="8" width="5" height="1"/><rect x="0" y="7" width="7" height="1"/></g></svg></div>
<div class="t" style="left:46px;top:578px;">(-3)</div>
<div class="t" style="left:88px;top:578px;">-</div>
<div class="ab" style="left:242px;top:579px"><svg width="11" height="11" shape-rendering="crispEdges"><rect width="11" height="11" fill="#0000FF"/><g fill="#fff"><rect x="1" y="1" width="9" height="2"/><rect x="4" y="3" width="3" height="5"/><rect x="1" y="8" width="9" height="2"/></g></svg></div>
<div class="t" style="left:262px;top:577px;">Koen (Breda)</div>
<div class="t" style="left:475px;top:578px;">Nederland</div>
<div class="t" style="left:599px;top:578px;">4.1</div>
<div class="ab" style="left:692px;top:579px"><svg width="7" height="11" shape-rendering="crispEdges"><g fill="#00FF00"><rect x="3" y="0" width="1" height="11"/><rect x="2" y="1" width="3" height="1"/><rect x="1" y="2" width="5" height="1"/><rect x="0" y="3" width="7" height="1"/></g></svg></div>
<div class="t" style="left:724px;top:578px;">75</div>
<div class="t" style="left:838px;top:578px;">58</div>
<div class="t" style="left:913px;top:578px;">283.5</div>
<div class="c" style="left:3px;top:595.5px;width:30px;height:18.5px;background:#FFFFFF"></div>
<div class="c" style="left:35px;top:595.5px;width:50px;height:18.5px;background:#FFFFFF"></div>
<div class="c" style="left:87px;top:595.5px;width:152px;height:18.5px;background:#FFFFFF"></div>
<div class="c" style="left:241px;top:595.5px;width:231px;height:18.5px;background:#FFFFFF"></div>
<div class="c" style="left:474px;top:595.5px;width:122px;height:18.5px;background:#FFFFFF"></div>
<div class="c" style="left:598px;top:595.5px;width:91px;height:18.5px;background:#FFFFFF"></div>
<div class="c" style="left:691px;top:595.5px;width:30px;height:18.5px;background:#FFFFFF"></div>
<div class="c" style="left:723px;top:595.5px;width:80px;height:18.5px;background:#FFFFFF"></div>
<div class="c" style="left:805px;top:595.5px;width:30px;height:18.5px;background:#FFFFFF"></div>
<div class="c" style="left:837px;top:595.5px;width:40px;height:18.5px;background:#FFFFFF"></div>
<div class="c" style="left:879px;top:595.5px;width:31px;height:18.5px;background:#FFFFFF"></div>
<div class="c" style="left:912px;top:595.5px;width:50px;height:18.5px;background:#FFFFFF"></div>
<div class="c" style="left:964px;top:595.5px;width:70px;height:18.5px;background:#FFFFFF"></div>
<div class="t" style="left:4px;top:599px;">19</div>
<div class="ab" style="left:36px;top:598px"><svg width="7" height="11" shape-rendering="crispEdges"><g fill="#00FF00"><rect x="3" y="0" width="1" height="11"/><rect x="2" y="1" width="3" height="1"/><rect x="1" y="2" width="5" height="1"/><rect x="0" y="3" width="7" height="1"/></g></svg></div>
<div class="t" style="left:46px;top:599px;">(+23)</div>
<div class="t" style="left:88px;top:599px;">-</div>
<div class="ab" style="left:242px;top:599px"><svg width="11" height="11" shape-rendering="crispEdges"><rect width="11" height="11" fill="#0000FF"/><g fill="#fff"><rect x="1" y="1" width="9" height="2"/><rect x="4" y="3" width="3" height="5"/><rect x="1" y="8" width="9" height="2"/></g></svg></div>
<div class="t" style="left:262px;top:598px;">Weerman Mark ('t Veld)</div>
<div class="t" style="left:475px;top:599px;">Nederland</div>
<div class="t" style="left:599px;top:599px;">3.3</div>
<div class="ab" style="left:692px;top:599px"><svg width="7" height="11" shape-rendering="crispEdges"><g fill="#00FF00"><rect x="3" y="0" width="1" height="11"/><rect x="2" y="1" width="3" height="1"/><rect x="1" y="2" width="5" height="1"/><rect x="0" y="3" width="7" height="1"/></g></svg></div>
<div class="t" style="left:724px;top:599px;">65</div>
<div class="t" style="left:838px;top:599px;">55</div>
<div class="t" style="left:913px;top:599px;">283.5</div>
<div class="c" style="left:3px;top:616.0px;width:30px;height:18.5px;background:#FFFFFF"></div>
<div class="c" style="left:35px;top:616.0px;width:50px;height:18.5px;background:#FFFFFF"></div>
<div class="c" style="left:87px;top:616.0px;width:152px;height:18.5px;background:#FFFFFF"></div>
<div class="c" style="left:241px;top:616.0px;width:231px;height:18.5px;background:#FFFFFF"></div>
<div class="c" style="left:474px;top:616.0px;width:122px;height:18.5px;background:#FFFFFF"></div>
<div class="c" style="left:598px;top:616.0px;width:91px;height:18.5px;background:#FFFFFF"></div>
<div class="c" style="left:691px;top:616.0px;width:30px;height:18.5px;background:#FFFFFF"></div>
<div class="c" style="left:723px;top:616.0px;width:80px;height:18.5px;background:#FFFFFF"></div>
<div class="c" style="left:805px;top:616.0px;width:30px;height:18.5px;background:#FFFFFF"></div>
<div class="c" style="left:837px;top:616.0px;width:40px;height:18.5px;background:#FFFFFF"></div>
<div class="c" style="left:879px;top:616.0px;width:31px;height:18.5px;background:#FFFFFF"></div>
<div class="c" style="left:912px;top:616.0px;width:50px;height:18.5px;background:#FFFFFF"></div>
<div class="c" style="left:964px;top:616.0px;width:70px;height:18.5px;background:#FFFFFF"></div>
<div class="t" style="left:4px;top:619px;">21</div>
<div class="ab" style="left:36px;top:618px"><svg width="7" height="11" shape-rendering="crispEdges"><g fill="#00FF00"><rect x="3" y="0" width="1" height="11"/><rect x="2" y="1" width="3" height="1"/><rect x="1" y="2" width="5" height="1"/><rect x="0" y="3" width="7" height="1"/></g></svg></div>
<div class="t" style="left:46px;top:619px;">(+13)</div>
<div class="t" style="left:88px;top:619px;">-</div>
<div class="ab" style="left:242px;top:620px"><svg width="11" height="11" shape-rendering="crispEdges"><rect width="11" height="11" fill="#0000FF"/><g fill="#fff"><rect x="1" y="1" width="9" height="2"/><rect x="4" y="3" width="3" height="5"/><rect x="1" y="8" width="9" height="2"/></g></svg></div>
<div class="t" style="left:262px;top:618px;">Jeroen (Breukelen)</div>
<div class="t" style="left:475px;top:619px;">Nederland</div>
<div class="t" style="left:599px;top:619px;">4.5</div>
<div class="ab" style="left:692px;top:620px"><svg width="7" height="11" shape-rendering="crispEdges"><g fill="#00FF00"><rect x="3" y="0" width="1" height="11"/><rect x="2" y="1" width="3" height="1"/><rect x="1" y="2" width="5" height="1"/><rect x="0" y="3" width="7" height="1"/></g></svg></div>
<div class="t" style="left:724px;top:619px;">50</div>
<div class="t" style="left:838px;top:619px;color:#008000;font-weight:bold;">60</div>
<div class="t" style="left:913px;top:619px;">283.3</div>
<div class="t" style="left:965px;top:619px;">(278.3 <span style="color:#FF0000">+ 5</span>)</div>
<div class="c" style="left:3px;top:636.5px;width:30px;height:18.5px;background:#FFFFFF"></div>
<div class="c" style="left:35px;top:636.5px;width:50px;height:18.5px;background:#FFFFFF"></div>
<div class="c" style="left:87px;top:636.5px;width:152px;height:18.5px;background:#FFFFFF"></div>
<div class="c" style="left:241px;top:636.5px;width:231px;height:18.5px;background:#FFFFFF"></div>
<div class="c" style="left:474px;top:636.5px;width:122px;height:18.5px;background:#FFFFFF"></div>
<div class="c" style="left:598px;top:636.5px;width:91px;height:18.5px;background:#FFFFFF"></div>
<div class="c" style="left:691px;top:636.5px;width:30px;height:18.5px;background:#FFFFFF"></div>
<div class="c" style="left:723px;top:636.5px;width:80px;height:18.5px;background:#FFFFFF"></div>
<div class="c" style="left:805px;top:636.5px;width:30px;height:18.5px;background:#FFFFFF"></div>
<div class="c" style="left:837px;top:636.5px;width:40px;height:18.5px;background:#FFFFFF"></div>
<div class="c" style="left:879px;top:636.5px;width:31px;height:18.5px;background:#FFFFFF"></div>
<div class="c" style="left:912px;top:636.5px;width:50px;height:18.5px;background:#FFFFFF"></div>
<div class="c" style="left:964px;top:636.5px;width:70px;height:18.5px;background:#FFFFFF"></div>
<div class="t" style="left:4px;top:640px;">22</div>
<div class="ab" style="left:36px;top:639px"><svg width="7" height="11" shape-rendering="crispEdges"><g fill="#FF0000"><rect x="3" y="0" width="1" height="11"/><rect x="2" y="9" width="3" height="1"/><rect x="1" y="8" width="5" height="1"/><rect x="0" y="7" width="7" height="1"/></g></svg></div>
<div class="t" style="left:46px;top:640px;">(-4)</div>
<div class="t" style="left:88px;top:640px;">-</div>
<div class="ab" style="left:242px;top:640px"><svg width="11" height="11" shape-rendering="crispEdges"><rect width="11" height="11" fill="#0000FF"/><g fill="#fff"><rect x="1" y="1" width="9" height="2"/><rect x="4" y="3" width="3" height="5"/><rect x="1" y="8" width="9" height="2"/></g></svg></div>
<div class="t" style="left:262px;top:639px;">Ruud (Gemert)</div>
<div class="t" style="left:475px;top:640px;">Nederland</div>
<div class="t" style="left:599px;top:640px;">4.6</div>
<div class="ab" style="left:692px;top:640px"><svg width="7" height="11" shape-rendering="crispEdges"><g fill="#00FF00"><rect x="3" y="0" width="1" height="11"/><rect x="2" y="1" width="3" height="1"/><rect x="1" y="2" width="5" height="1"/><rect x="0" y="3" width="7" height="1"/></g></svg></div>
<div class="t" style="left:724px;top:640px;">62</div>
<div class="t" style="left:838px;top:640px;">58</div>
<div class="t" style="left:913px;top:640px;">283.1</div>
<div class="c" style="left:3px;top:657.0px;width:30px;height:18.5px;background:#FFFFFF"></div>
<div class="c" style="left:35px;top:657.0px;width:50px;height:18.5px;background:#FFFFFF"></div>
<div class="c" style="left:87px;top:657.0px;width:152px;height:18.5px;background:#FFFFFF"></div>
<div class="c" style="left:241px;top:657.0px;width:231px;height:18.5px;background:#FFFFFF"></div>
<div class="c" style="left:474px;top:657.0px;width:122px;height:18.5px;background:#FFFFFF"></div>
<div class="c" style="left:598px;top:657.0px;width:91px;height:18.5px;background:#FFFFFF"></div>
<div class="c" style="left:691px;top:657.0px;width:30px;height:18.5px;background:#FFFFFF"></div>
<div class="c" style="left:723px;top:657.0px;width:80px;height:18.5px;background:#FFFFFF"></div>
<div class="c" style="left:805px;top:657.0px;width:30px;height:18.5px;background:#FFFFFF"></div>
<div class="c" style="left:837px;top:657.0px;width:40px;height:18.5px;background:#FFFFFF"></div>
<div class="c" style="left:879px;top:657.0px;width:31px;height:18.5px;background:#FFFFFF"></div>
<div class="c" style="left:912px;top:657.0px;width:50px;height:18.5px;background:#FFFFFF"></div>
<div class="c" style="left:964px;top:657.0px;width:70px;height:18.5px;background:#FFFFFF"></div>
<div class="t" style="left:4px;top:660px;">22</div>
<div class="ab" style="left:36px;top:659px"><svg width="7" height="11" shape-rendering="crispEdges"><g fill="#00FF00"><rect x="3" y="0" width="1" height="11"/><rect x="2" y="1" width="3" height="1"/><rect x="1" y="2" width="5" height="1"/><rect x="0" y="3" width="7" height="1"/></g></svg></div>
<div class="t" style="left:46px;top:660px;">(+4)</div>
<div class="t" style="left:88px;top:660px;">-</div>
<div class="ab" style="left:242px;top:661px"><svg width="11" height="11" shape-rendering="crispEdges"><rect width="11" height="11" fill="#0000FF"/><g fill="#fff"><rect x="1" y="1" width="9" height="2"/><rect x="4" y="3" width="3" height="5"/><rect x="1" y="8" width="9" height="2"/></g></svg></div>
<div class="t" style="left:262px;top:659px;">Yves (Schellebelle)</div>
<div class="t" style="left:475px;top:660px;">België</div>
<div class="t" style="left:599px;top:660px;">3.7</div>
<div class="ab" style="left:692px;top:661px"><svg width="7" height="11" shape-rendering="crispEdges"><g fill="#00FF00"><rect x="3" y="0" width="1" height="11"/><rect x="2" y="1" width="3" height="1"/><rect x="1" y="2" width="5" height="1"/><rect x="0" y="3" width="7" height="1"/></g></svg></div>
<div class="t" style="left:724px;top:660px;">65</div>
<div class="t" style="left:838px;top:660px;">69</div>
<div class="t" style="left:913px;top:660px;">283.1</div>
<div class="c" style="left:3px;top:677.5px;width:30px;height:18.5px;background:#FFFFFF"></div>
<div class="c" style="left:35px;top:677.5px;width:50px;height:18.5px;background:#FFFFFF"></div>
<div class="c" style="left:87px;top:677.5px;width:152px;height:18.5px;background:#FFFFFF"></div>
<div class="c" style="left:241px;top:677.5px;width:231px;height:18.5px;background:#FFFFFF"></div>
<div class="c" style="left:474px;top:677.5px;width:122px;height:18.5px;background:#FFFFFF"></div>
<div class="c" style="left:598px;top:677.5px;width:91px;height:18.5px;background:#FFFFFF"></div>
<div class="c" style="left:691px;top:677.5px;width:30px;height:18.5px;background:#FFFFFF"></div>
<div class="c" style="left:723px;top:677.5px;width:80px;height:18.5px;background:#FFFFFF"></div>
<div class="c" style="left:805px;top:677.5px;width:30px;height:18.5px;background:#FFFFFF"></div>
<div class="c" style="left:837px;top:677.5px;width:40px;height:18.5px;background:#FFFFFF"></div>
<div class="c" style="left:879px;top:677.5px;width:31px;height:18.5px;background:#FFFFFF"></div>
<div class="c" style="left:912px;top:677.5px;width:50px;height:18.5px;background:#FFFFFF"></div>
<div class="c" style="left:964px;top:677.5px;width:70px;height:18.5px;background:#FFFFFF"></div>
<div class="t" style="left:4px;top:681px;">24</div>
<div class="ab" style="left:36px;top:680px"><svg width="7" height="11" shape-rendering="crispEdges"><g fill="#FF0000"><rect x="3" y="0" width="1" height="11"/><rect x="2" y="9" width="3" height="1"/><rect x="1" y="8" width="5" height="1"/><rect x="0" y="7" width="7" height="1"/></g></svg></div>
<div class="t" style="left:46px;top:681px;">(-5)</div>
<div class="t" style="left:88px;top:681px;">-</div>
<div class="ab" style="left:242px;top:681px"><svg width="11" height="11" shape-rendering="crispEdges"><rect width="11" height="11" fill="#0000FF"/><g fill="#fff"><rect x="1" y="1" width="9" height="2"/><rect x="4" y="3" width="3" height="5"/><rect x="1" y="8" width="9" height="2"/></g></svg></div>
<div class="t" style="left:262px;top:680px;">Daniël (Amstelveen)</div>
<div class="t" style="left:475px;top:681px;">Nederland</div>
<div class="t" style="left:599px;top:681px;">4.2</div>
<div class="ab" style="left:692px;top:681px"><svg width="7" height="11" shape-rendering="crispEdges"><g fill="#00FF00"><rect x="3" y="0" width="1" height="11"/><rect x="2" y="1" width="3" height="1"/><rect x="1" y="2" width="5" height="1"/><rect x="0" y="3" width="7" height="1"/></g></svg></div>
<div class="t" style="left:724px;top:681px;">56</div>
<div class="t" style="left:838px;top:681px;">57</div>
<div class="t" style="left:913px;top:681px;">282.7</div>
<div class="c" style="left:3px;top:698.0px;width:30px;height:18.5px;background:#FFFFFF"></div>
<div class="c" style="left:35px;top:698.0px;width:50px;height:18.5px;background:#FFFFFF"></div>
<div class="c" style="left:87px;top:698.0px;width:152px;height:18.5px;background:#FFFFFF"></div>
<div class="c" style="left:241px;top:698.0px;width:231px;height:18.5px;background:#FFFFFF"></div>
<div class="c" style="left:474px;top:698.0px;width:122px;height:18.5px;background:#FFFFFF"></div>
<div class="c" style="left:598px;top:698.0px;width:91px;height:18.5px;background:#FFFFFF"></div>
<div class="c" style="left:691px;top:698.0px;width:30px;height:18.5px;background:#FFFFFF"></div>
<div class="c" style="left:723px;top:698.0px;width:80px;height:18.5px;background:#FFFFFF"></div>
<div class="c" style="left:805px;top:698.0px;width:30px;height:18.5px;background:#FFFFFF"></div>
<div class="c" style="left:837px;top:698.0px;width:40px;height:18.5px;background:#FFFFFF"></div>
<div class="c" style="left:879px;top:698.0px;width:31px;height:18.5px;background:#FFFFFF"></div>
<div class="c" style="left:912px;top:698.0px;width:50px;height:18.5px;background:#FFFFFF"></div>
<div class="c" style="left:964px;top:698.0px;width:70px;height:18.5px;background:#FFFFFF"></div>
<div class="t" style="left:4px;top:701px;">25</div>
<div class="ab" style="left:36px;top:700px"><svg width="7" height="11" shape-rendering="crispEdges"><g fill="#00FF00"><rect x="3" y="0" width="1" height="11"/><rect x="2" y="1" width="3" height="1"/><rect x="1" y="2" width="5" height="1"/><rect x="0" y="3" width="7" height="1"/></g></svg></div>
<div class="t" style="left:46px;top:701px;">(+20)</div>
<div class="t" style="left:88px;top:701px;">-</div>
<div class="ab" style="left:242px;top:702px"><svg width="11" height="11" shape-rendering="crispEdges"><rect width="11" height="11" fill="#0000FF"/><g fill="#fff"><rect x="1" y="1" width="9" height="2"/><rect x="4" y="3" width="3" height="5"/><rect x="1" y="8" width="9" height="2"/></g></svg></div>
<div class="t" style="left:262px;top:700px;">Jm (Tervuren)</div>
<div class="t" style="left:475px;top:701px;">België</div>
<div class="t" style="left:599px;top:701px;">3.6</div>
<div class="ab" style="left:692px;top:702px"><svg width="7" height="11" shape-rendering="crispEdges"><g fill="#00FF00"><rect x="3" y="0" width="1" height="11"/><rect x="2" y="1" width="3" height="1"/><rect x="1" y="2" width="5" height="1"/><rect x="0" y="3" width="7" height="1"/></g></svg></div>
<div class="t" style="left:724px;top:701px;">78</div>
<div class="t" style="left:838px;top:701px;">58</div>
<div class="t" style="left:913px;top:701px;">282.6</div>
<div class="c" style="left:3px;top:718.5px;width:30px;height:18.5px;background:#FFFFFF"></div>
<div class="c" style="left:35px;top:718.5px;width:50px;height:18.5px;background:#FFFFFF"></div>
<div class="c" style="left:87px;top:718.5px;width:152px;height:18.5px;background:#FFFFFF"></div>
<div class="c" style="left:241px;top:718.5px;width:231px;height:18.5px;background:#FFFFFF"></div>
<div class="c" style="left:474px;top:718.5px;width:122px;height:18.5px;background:#FFFFFF"></div>
<div class="c" style="left:598px;top:718.5px;width:91px;height:18.5px;background:#FFFFFF"></div>
<div class="c" style="left:691px;top:718.5px;width:30px;height:18.5px;background:#FFFFFF"></div>
<div class="c" style="left:723px;top:718.5px;width:80px;height:18.5px;background:#FFFFFF"></div>
<div class="c" style="left:805px;top:718.5px;width:30px;height:18.5px;background:#FFFFFF"></div>
<div class="c" style="left:837px;top:718.5px;width:40px;height:18.5px;background:#FFFFFF"></div>
<div class="c" style="left:879px;top:718.5px;width:31px;height:18.5px;background:#FFFFFF"></div>
<div class="c" style="left:912px;top:718.5px;width:50px;height:18.5px;background:#FFFFFF"></div>
<div class="c" style="left:964px;top:718.5px;width:70px;height:18.5px;background:#FFFFFF"></div>
<div class="t" style="left:4px;top:722px;">26</div>
<div class="ab" style="left:36px;top:721px"><svg width="7" height="11" shape-rendering="crispEdges"><g fill="#FF0000"><rect x="3" y="0" width="1" height="11"/><rect x="2" y="9" width="3" height="1"/><rect x="1" y="8" width="5" height="1"/><rect x="0" y="7" width="7" height="1"/></g></svg></div>
<div class="t" style="left:46px;top:722px;">(-5)</div>
<div class="t" style="left:88px;top:722px;">-</div>
<div class="ab" style="left:242px;top:722px"><svg width="11" height="11" shape-rendering="crispEdges"><rect width="11" height="11" fill="#0000FF"/><g fill="#fff"><rect x="1" y="1" width="9" height="2"/><rect x="4" y="3" width="3" height="5"/><rect x="1" y="8" width="9" height="2"/></g></svg></div>
<div class="t" style="left:262px;top:721px;">Laurens (Rijssen)</div>
<div class="t" style="left:475px;top:722px;">Nederland</div>
<div class="t" style="left:599px;top:722px;">4.8</div>
<div class="ab" style="left:692px;top:722px"><svg width="7" height="11" shape-rendering="crispEdges"><g fill="#00FF00"><rect x="3" y="0" width="1" height="11"/><rect x="2" y="1" width="3" height="1"/><rect x="1" y="2" width="5" height="1"/><rect x="0" y="3" width="7" height="1"/></g></svg></div>
<div class="t" style="left:724px;top:722px;">65</div>
<div class="t" style="left:838px;top:722px;">59</div>
<div class="t" style="left:913px;top:722px;">282.5</div>
<div class="c" style="left:3px;top:739.0px;width:30px;height:18.5px;background:#FFFFFF"></div>
<div class="c" style="left:35px;top:739.0px;width:50px;height:18.5px;background:#FFFFFF"></div>
<div class="c" style="left:87px;top:739.0px;width:152px;height:18.5px;background:#FFFFFF"></div>
<div class="c" style="left:241px;top:739.0px;width:231px;height:18.5px;background:#FFFFFF"></div>
<div class="c" style="left:474px;top:739.0px;width:122px;height:18.5px;background:#FFFFFF"></div>
<div class="c" style="left:598px;top:739.0px;width:91px;height:18.5px;background:#FFFFFF"></div>
<div class="c" style="left:691px;top:739.0px;width:30px;height:18.5px;background:#FFFFFF"></div>
<div class="c" style="left:723px;top:739.0px;width:80px;height:18.5px;background:#FFFFFF"></div>
<div class="c" style="left:805px;top:739.0px;width:30px;height:18.5px;background:#FFFFFF"></div>
<div class="c" style="left:837px;top:739.0px;width:40px;height:18.5px;background:#FFFFFF"></div>
<div class="c" style="left:879px;top:739.0px;width:31px;height:18.5px;background:#FFFFFF"></div>
<div class="c" style="left:912px;top:739.0px;width:50px;height:18.5px;background:#FFFFFF"></div>
<div class="c" style="left:964px;top:739.0px;width:70px;height:18.5px;background:#FFFFFF"></div>
<div class="t" style="left:4px;top:742px;">27</div>
<div class="ab" style="left:36px;top:741px"><svg width="7" height="11" shape-rendering="crispEdges"><g fill="#00FF00"><rect x="3" y="0" width="1" height="11"/><rect x="2" y="1" width="3" height="1"/><rect x="1" y="2" width="5" height="1"/><rect x="0" y="3" width="7" height="1"/></g></svg></div>
<div class="t" style="left:46px;top:742px;">(+19)</div>
<div class="t" style="left:88px;top:742px;">-</div>
<div class="ab" style="left:242px;top:743px"><svg width="11" height="11" shape-rendering="crispEdges"><rect width="11" height="11" fill="#0000FF"/><g fill="#fff"><rect x="1" y="1" width="9" height="2"/><rect x="4" y="3" width="3" height="5"/><rect x="1" y="8" width="9" height="2"/></g></svg></div>
<div class="t" style="left:262px;top:741px;">Dirk (Sneek)</div>
<div class="t" style="left:475px;top:742px;">Nederland</div>
<div class="t" style="left:599px;top:742px;">3.7</div>
<div class="ab" style="left:692px;top:743px"><svg width="7" height="11" shape-rendering="crispEdges"><g fill="#00FF00"><rect x="3" y="0" width="1" height="11"/><rect x="2" y="1" width="3" height="1"/><rect x="1" y="2" width="5" height="1"/><rect x="0" y="3" width="7" height="1"/></g></svg></div>
<div class="t" style="left:724px;top:742px;">70</div>
<div class="t" style="left:838px;top:742px;">53</div>
<div class="t" style="left:913px;top:742px;">282.4</div>
<div class="c" style="left:3px;top:759.5px;width:30px;height:18.5px;background:#FFFFFF"></div>
<div class="c" style="left:35px;top:759.5px;width:50px;height:18.5px;background:#FFFFFF"></div>
<div class="c" style="left:87px;top:759.5px;width:152px;height:18.5px;background:#FFFFFF"></div>
<div class="c" style="left:241px;top:759.5px;width:231px;height:18.5px;background:#FFFFFF"></div>
<div class="c" style="left:474px;top:759.5px;width:122px;height:18.5px;background:#FFFFFF"></div>
<div class="c" style="left:598px;top:759.5px;width:91px;height:18.5px;background:#FFFFFF"></div>
<div class="c" style="left:691px;top:759.5px;width:30px;height:18.5px;background:#FFFFFF"></div>
<div class="c" style="left:723px;top:759.5px;width:80px;height:18.5px;background:#FFFFFF"></div>
<div class="c" style="left:805px;top:759.5px;width:30px;height:18.5px;background:#FFFFFF"></div>
<div class="c" style="left:837px;top:759.5px;width:40px;height:18.5px;background:#FFFFFF"></div>
<div class="c" style="left:879px;top:759.5px;width:31px;height:18.5px;background:#FFFFFF"></div>
<div class="c" style="left:912px;top:759.5px;width:50px;height:18.5px;background:#FFFFFF"></div>
<div class="c" style="left:964px;top:759.5px;width:70px;height:18.5px;background:#FFFFFF"></div>
<div class="t" style="left:4px;top:763px;">28</div>
<div class="ab" style="left:36px;top:762px"><svg width="7" height="11" shape-rendering="crispEdges"><g fill="#FF0000"><rect x="3" y="0" width="1" height="11"/><rect x="2" y="9" width="3" height="1"/><rect x="1" y="8" width="5" height="1"/><rect x="0" y="7" width="7" height="1"/></g></svg></div>
<div class="t" style="left:46px;top:763px;">(-22)</div>
<div class="t" style="left:88px;top:763px;">-</div>
<div class="ab" style="left:242px;top:763px"><svg width="11" height="11" shape-rendering="crispEdges"><rect width="11" height="11" fill="#0000FF"/><g fill="#fff"><rect x="1" y="1" width="9" height="2"/><rect x="4" y="3" width="3" height="5"/><rect x="1" y="8" width="9" height="2"/></g></svg></div>
<div class="t" style="left:262px;top:762px;">Marcus (Sleidinge)</div>
<div class="t" style="left:475px;top:763px;">België</div>
<div class="t" style="left:599px;top:763px;">4.0</div>
<div class="ab" style="left:692px;top:763px"><svg width="7" height="11" shape-rendering="crispEdges"><g fill="#00FF00"><rect x="3" y="0" width="1" height="11"/><rect x="2" y="1" width="3" height="1"/><rect x="1" y="2" width="5" height="1"/><rect x="0" y="3" width="7" height="1"/></g></svg></div>
<div class="t" style="left:724px;top:763px;">55</div>
<div class="t" style="left:838px;top:763px;">65</div>
<div class="t" style="left:913px;top:763px;">281.7</div>
<div class="c" style="left:3px;top:780.0px;width:30px;height:18.5px;background:#FFFFFF"></div>
<div class="c" style="left:35px;top:780.0px;width:50px;height:18.5px;background:#FFFFFF"></div>
<div class="c" style="left:87px;top:780.0px;width:152px;height:18.5px;background:#FFFFFF"></div>
<div class="c" style="left:241px;top:780.0px;width:231px;height:18.5px;background:#FFFFFF"></div>
<div class="c" style="left:474px;top:780.0px;width:122px;height:18.5px;background:#FFFFFF"></div>
<div class="c" style="left:598px;top:780.0px;width:91px;height:18.5px;background:#FFFFFF"></div>
<div class="c" style="left:691px;top:780.0px;width:30px;height:18.5px;background:#FFFFFF"></div>
<div class="c" style="left:723px;top:780.0px;width:80px;height:18.5px;background:#FFFFFF"></div>
<div class="c" style="left:805px;top:780.0px;width:30px;height:18.5px;background:#FFFFFF"></div>
<div class="c" style="left:837px;top:780.0px;width:40px;height:18.5px;background:#FFFFFF"></div>
<div class="c" style="left:879px;top:780.0px;width:31px;height:18.5px;background:#FFFFFF"></div>
<div class="c" style="left:912px;top:780.0px;width:50px;height:18.5px;background:#FFFFFF"></div>
<div class="c" style="left:964px;top:780.0px;width:70px;height:18.5px;background:#FFFFFF"></div>
<div class="t" style="left:4px;top:783px;">29</div>
<div class="ab" style="left:36px;top:782px"><svg width="7" height="11" shape-rendering="crispEdges"><g fill="#00FF00"><rect x="3" y="0" width="1" height="11"/><rect x="2" y="1" width="3" height="1"/><rect x="1" y="2" width="5" height="1"/><rect x="0" y="3" width="7" height="1"/></g></svg></div>
<div class="t" style="left:46px;top:783px;">(+2)</div>
<div class="t" style="left:88px;top:783px;">-</div>
<div class="ab" style="left:242px;top:784px"><svg width="11" height="11" shape-rendering="crispEdges"><rect width="11" height="11" fill="#0000FF"/><g fill="#fff"><rect x="1" y="1" width="9" height="2"/><rect x="4" y="3" width="3" height="5"/><rect x="1" y="8" width="9" height="2"/></g></svg></div>
<div class="t" style="left:262px;top:782px;">Martijn (Vlaardingen)</div>
<div class="t" style="left:475px;top:783px;">Nederland</div>
<div class="t" style="left:599px;top:783px;">3.7</div>
<div class="ab" style="left:692px;top:784px"><svg width="7" height="11" shape-rendering="crispEdges"><g fill="#00FF00"><rect x="3" y="0" width="1" height="11"/><rect x="2" y="1" width="3" height="1"/><rect x="1" y="2" width="5" height="1"/><rect x="0" y="3" width="7" height="1"/></g></svg></div>
<div class="t" style="left:724px;top:783px;">59</div>
<div class="t" style="left:838px;top:783px;">68</div>
<div class="t" style="left:913px;top:783px;">281.5</div>
<div class="c" style="left:3px;top:800.5px;width:30px;height:18.5px;background:#FFFFFF"></div>
<div class="c" style="left:35px;top:800.5px;width:50px;height:18.5px;background:#FFFFFF"></div>
<div class="c" style="left:87px;top:800.5px;width:152px;height:18.5px;background:#FFFFFF"></div>
<div class="c" style="left:241px;top:800.5px;width:231px;height:18.5px;background:#FFFFFF"></div>
<div class="c" style="left:474px;top:800.5px;width:122px;height:18.5px;background:#FFFFFF"></div>
<div class="c" style="left:598px;top:800.5px;width:91px;height:18.5px;background:#FFFFFF"></div>
<div class="c" style="left:691px;top:800.5px;width:30px;height:18.5px;background:#FFFFFF"></div>
<div class="c" style="left:723px;top:800.5px;width:80px;height:18.5px;background:#FFFFFF"></div>
<div class="c" style="left:805px;top:800.5px;width:30px;height:18.5px;background:#FFFFFF"></div>
<div class="c" style="left:837px;top:800.5px;width:40px;height:18.5px;background:#FFFFFF"></div>
<div class="c" style="left:879px;top:800.5px;width:31px;height:18.5px;background:#FFFFFF"></div>
<div class="c" style="left:912px;top:800.5px;width:50px;height:18.5px;background:#FFFFFF"></div>
<div class="c" style="left:964px;top:800.5px;width:70px;height:18.5px;background:#FFFFFF"></div>
<div class="t" style="left:4px;top:804px;">29</div>
<div class="ab" style="left:36px;top:803px"><svg width="7" height="11" shape-rendering="crispEdges"><g fill="#FF0000"><rect x="3" y="0" width="1" height="11"/><rect x="2" y="9" width="3" height="1"/><rect x="1" y="8" width="5" height="1"/><rect x="0" y="7" width="7" height="1"/></g></svg></div>
<div class="t" style="left:46px;top:804px;">(-6)</div>
<div class="t" style="left:88px;top:804px;">-</div>
<div class="ab" style="left:242px;top:804px"><svg width="11" height="11" shape-rendering="crispEdges"><rect width="11" height="11" fill="#0000FF"/><g fill="#fff"><rect x="1" y="1" width="9" height="2"/><rect x="4" y="3" width="3" height="5"/><rect x="1" y="8" width="9" height="2"/></g></svg></div>
<div class="t" style="left:262px;top:803px;">Geert (Lint)</div>
<div class="t" style="left:475px;top:804px;">België</div>
<div class="t" style="left:599px;top:804px;">4.6</div>
<div class="ab" style="left:692px;top:804px"><svg width="7" height="11" shape-rendering="crispEdges"><g fill="#00FF00"><rect x="3" y="0" width="1" height="11"/><rect x="2" y="1" width="3" height="1"/><rect x="1" y="2" width="5" height="1"/><rect x="0" y="3" width="7" height="1"/></g></svg></div>
<div class="t" style="left:724px;top:804px;">68</div>
<div class="t" style="left:838px;top:804px;">58</div>
<div class="t" style="left:913px;top:804px;">281.5</div>
<div class="c" style="left:3px;top:821.0px;width:30px;height:18.5px;background:#FFFFFF"></div>
<div class="c" style="left:35px;top:821.0px;width:50px;height:18.5px;background:#FFFFFF"></div>
<div class="c" style="left:87px;top:821.0px;width:152px;height:18.5px;background:#FFFFFF"></div>
<div class="c" style="left:241px;top:821.0px;width:231px;height:18.5px;background:#FFFFFF"></div>
<div class="c" style="left:474px;top:821.0px;width:122px;height:18.5px;background:#FFFFFF"></div>
<div class="c" style="left:598px;top:821.0px;width:91px;height:18.5px;background:#FFFFFF"></div>
<div class="c" style="left:691px;top:821.0px;width:30px;height:18.5px;background:#FFFFFF"></div>
<div class="c" style="left:723px;top:821.0px;width:80px;height:18.5px;background:#FFFFFF"></div>
<div class="c" style="left:805px;top:821.0px;width:30px;height:18.5px;background:#FFFFFF"></div>
<div class="c" style="left:837px;top:821.0px;width:40px;height:18.5px;background:#FFFFFF"></div>
<div class="c" style="left:879px;top:821.0px;width:31px;height:18.5px;background:#FFFFFF"></div>
<div class="c" style="left:912px;top:821.0px;width:50px;height:18.5px;background:#FFFFFF"></div>
<div class="c" style="left:964px;top:821.0px;width:70px;height:18.5px;background:#FFFFFF"></div>
<div class="t" style="left:4px;top:824px;color:#FF0000;font-weight:bold;">31</div>
<div class="ab" style="left:36px;top:823px"><svg width="7" height="11" shape-rendering="crispEdges"><g fill="#00FF00"><rect x="3" y="0" width="1" height="11"/><rect x="2" y="1" width="3" height="1"/><rect x="1" y="2" width="5" height="1"/><rect x="0" y="3" width="7" height="1"/></g></svg></div>
<div class="t" style="left:46px;top:824px;color:#FF0000;font-weight:bold;">(+2)</div>
<div class="t" style="left:88px;top:824px;color:#FF0000;font-weight:bold;">-</div>
<div class="ab" style="left:242px;top:825px"><svg width="11" height="11" shape-rendering="crispEdges"><rect width="11" height="11" fill="#0000FF"/><g fill="#fff"><rect x="1" y="1" width="9" height="2"/><rect x="4" y="3" width="3" height="5"/><rect x="1" y="8" width="9" height="2"/></g></svg></div>
<div id="b_NORMAAL" class="t" style="left:261.80px;top:823px;color:#FF0000;font-weight:bold;letter-spacing:-0.265px;">NORMAAL</div>
<div class="t" style="left:475.3px;top:824px;color:#FF0000;font-weight:bold;letter-spacing:0.400px;">Anders</div>
<div class="t" style="left:599px;top:824px;color:#FF0000;font-weight:bold;">3.1</div>
<div class="ab" style="left:692px;top:825px"><svg width="7" height="11" shape-rendering="crispEdges"><g fill="#00FF00"><rect x="3" y="0" width="1" height="11"/><rect x="2" y="1" width="3" height="1"/><rect x="1" y="2" width="5" height="1"/><rect x="0" y="3" width="7" height="1"/></g></svg></div>
<div class="t" style="left:724px;top:824px;color:#FF0000;font-weight:bold;">70</div>
<div class="t" style="left:838px;top:824px;color:#FF0000;font-weight:bold;">62</div>
<div class="t" style="left:913px;top:824px;color:#FF0000;font-weight:bold;">281.4</div>
<div class="c" style="left:3px;top:841.5px;width:30px;height:18.5px;background:#FFFFFF"></div>
<div class="c" style="left:35px;top:841.5px;width:50px;height:18.5px;background:#FFFFFF"></div>
<div class="c" style="left:87px;top:841.5px;width:152px;height:18.5px;background:#FFFFFF"></div>
<div class="c" style="left:241px;top:841.5px;width:231px;height:18.5px;background:#FFFFFF"></div>
<div class="c" style="left:474px;top:841.5px;width:122px;height:18.5px;background:#FFFFFF"></div>
<div class="c" style="left:598px;top:841.5px;width:91px;height:18.5px;background:#FFFFFF"></div>
<div class="c" style="left:691px;top:841.5px;width:30px;height:18.5px;background:#FFFFFF"></div>
<div class="c" style="left:723px;top:841.5px;width:80px;height:18.5px;background:#FFFFFF"></div>
<div class="c" style="left:805px;top:841.5px;width:30px;height:18.5px;background:#FFFFFF"></div>
<div class="c" style="left:837px;top:841.5px;width:40px;height:18.5px;background:#FFFFFF"></div>
<div class="c" style="left:879px;top:841.5px;width:31px;height:18.5px;background:#FFFFFF"></div>
<div class="c" style="left:912px;top:841.5px;width:50px;height:18.5px;background:#FFFFFF"></div>
<div class="c" style="left:964px;top:841.5px;width:70px;height:18.5px;background:#FFFFFF"></div>
<div class="t" style="left:4px;top:845px;">32</div>
<div class="ab" style="left:36px;top:844px"><svg width="7" height="11" shape-rendering="crispEdges"><g fill="#00FF00"><rect x="3" y="0" width="1" height="11"/><rect x="2" y="1" width="3" height="1"/><rect x="1" y="2" width="5" height="1"/><rect x="0" y="3" width="7" height="1"/></g></svg></div>
<div class="t" style="left:46px;top:845px;">(+3)</div>
<div class="t" style="left:88px;top:845px;">-</div>
<div class="ab" style="left:242px;top:845px"><svg width="11" height="11" shape-rendering="crispEdges"><rect width="11" height="11" fill="#0000FF"/><g fill="#fff"><rect x="1" y="1" width="9" height="2"/><rect x="4" y="3" width="3" height="5"/><rect x="1" y="8" width="9" height="2"/></g></svg></div>
<div class="t" style="left:262px;top:844px;">Niels (Hoofddorp)</div>
<div class="t" style="left:475px;top:845px;">Nederland</div>
<div class="t" style="left:599px;top:845px;">3.6</div>
<div class="ab" style="left:692px;top:845px"><svg width="7" height="11" shape-rendering="crispEdges"><g fill="#00FF00"><rect x="3" y="0" width="1" height="11"/><rect x="2" y="1" width="3" height="1"/><rect x="1" y="2" width="5" height="1"/><rect x="0" y="3" width="7" height="1"/></g></svg></div>
<div class="t" style="left:724px;top:845px;">72</div>
<div class="t" style="left:838px;top:845px;">66</div>
<div class="t" style="left:913px;top:845px;">280.9</div>
<div class="c" style="left:3px;top:862.0px;width:30px;height:18.5px;background:#FFFFFF"></div>
<div class="c" style="left:35px;top:862.0px;width:50px;height:18.5px;background:#FFFFFF"></div>
<div class="c" style="left:87px;top:862.0px;width:152px;height:18.5px;background:#FFFFFF"></div>
<div class="c" style="left:241px;top:862.0px;width:231px;height:18.5px;background:#FFFFFF"></div>
<div class="c" style="left:474px;top:862.0px;width:122px;height:18.5px;background:#FFFFFF"></div>
<div class="c" style="left:598px;top:862.0px;width:91px;height:18.5px;background:#FFFFFF"></div>
<div class="c" style="left:691px;top:862.0px;width:30px;height:18.5px;background:#FFFFFF"></div>
<div class="c" style="left:723px;top:862.0px;width:80px;height:18.5px;background:#FFFFFF"></div>
<div class="c" style="left:805px;top:862.0px;width:30px;height:18.5px;background:#FFFFFF"></div>
<div class="c" style="left:837px;top:862.0px;width:40px;height:18.5px;background:#FFFFFF"></div>
<div class="c" style="left:879px;top:862.0px;width:31px;height:18.5px;background:#FFFFFF"></div>
<div class="c" style="left:912px;top:862.0px;width:50px;height:18.5px;background:#FFFFFF"></div>
<div class="c" style="left:964px;top:862.0px;width:70px;height:18.5px;background:#FFFFFF"></div>
<div class="t" style="left:4px;top:865px;">33</div>
<div class="ab" style="left:36px;top:864px"><svg width="7" height="11" shape-rendering="crispEdges"><g fill="#FF0000"><rect x="3" y="0" width="1" height="11"/><rect x="2" y="9" width="3" height="1"/><rect x="1" y="8" width="5" height="1"/><rect x="0" y="7" width="7" height="1"/></g></svg></div>
<div class="t" style="left:46px;top:865px;">(-9)</div>
<div class="t" style="left:88px;top:865px;">-</div>
<div class="ab" style="left:242px;top:866px"><svg width="11" height="11" shape-rendering="crispEdges"><rect width="11" height="11" fill="#0000FF"/><g fill="#fff"><rect x="1" y="1" width="9" height="2"/><rect x="4" y="3" width="3" height="5"/><rect x="1" y="8" width="9" height="2"/></g></svg></div>
<div class="t" style="left:262px;top:864px;">Mark (Hellevoetsluis)</div>
<div class="t" style="left:475px;top:865px;">Nederland</div>
<div class="t" style="left:599px;top:865px;">4.4</div>
<div class="ab" style="left:692px;top:866px"><svg width="7" height="11" shape-rendering="crispEdges"><g fill="#00FF00"><rect x="3" y="0" width="1" height="11"/><rect x="2" y="1" width="3" height="1"/><rect x="1" y="2" width="5" height="1"/><rect x="0" y="3" width="7" height="1"/></g></svg></div>
<div class="t" style="left:724px;top:865px;">69</div>
<div class="t" style="left:838px;top:865px;">56</div>
<div class="t" style="left:913px;top:865px;">280.5</div>
</body></html>
